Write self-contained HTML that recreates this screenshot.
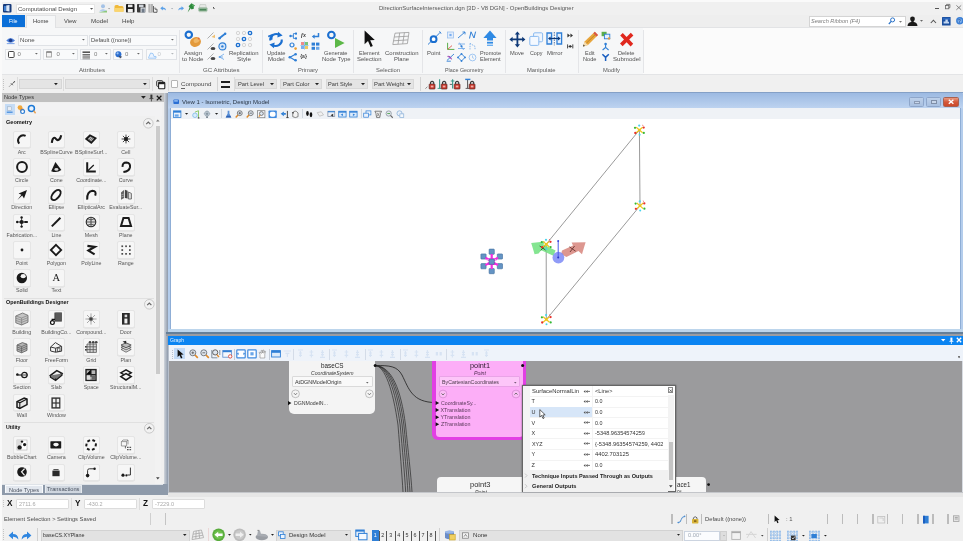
<!DOCTYPE html>
<html><head><meta charset="utf-8"><title>OpenBuildings Designer</title>
<style>
*{box-sizing:border-box;margin:0;padding:0}
html,body{width:963px;height:541px;overflow:hidden;background:#f0f0f0}
#root{position:absolute;left:0;top:0;width:963px;height:541px;overflow:hidden;background:#f0f0f0;filter:blur(0.45px);font-family:"Liberation Sans",sans-serif;font-size:6px;color:#444}
.a{position:absolute}
.t{position:absolute;white-space:nowrap;line-height:1.15;transform-origin:0 50%}
svg{position:absolute;overflow:visible}
</style></head><body><div id="root">
<div class="a" style="left:0px;top:0px;width:963px;height:15px;background:#f0f0f0;"></div>
<svg style="left:3px;top:4px;" width="9" height="9" viewBox="0 0 9 9"><rect x="0" y="0" width="8.5" height="8.5" rx="1" fill="#173a7a"/><path d="M3.2 1.5 L6.5 1 L6.5 7.5 L3.2 7 Z" fill="#d8e6f8"/><rect x="1" y="2" width="2" height="5" fill="#3f7fd0"/></svg>
<div class="a" style="left:16px;top:4px;width:79px;height:10px;background:#ffffff;border:1px solid #e6e6e6;"></div>
<div class="t" style="left:18.00px;top:5.55px;font-size:6px;color:#4a4a4a;">Computational Design</div>
<svg style="left:89.90px;top:8.08px" width="3.20" height="1.84" viewBox="0 0 3.20 1.84"><path d="M0 0 L3.20 0 L1.60 1.84 Z" fill="#555"/></svg>
<svg style="left:98px;top:3px;" width="12" height="11" viewBox="0 0 12 11"><circle cx="5" cy="3.2" r="2" fill="#a4c2e6"/><path d="M1 8.5 Q5 3.5 9 8.5 Z" fill="#b4cdec"/><path d="M0.5 9.6 L9 7.6 L9 9.6 Z" fill="#8cc87a"/></svg>
<svg style="left:108.20px;top:7.67px" width="2.20" height="1.26" viewBox="0 0 2.20 1.26"><path d="M0 0 L2.20 0 L1.10 1.26 Z" fill="#999"/></svg>
<svg style="left:114px;top:4px;" width="10" height="9" viewBox="0 0 10 9"><path d="M0.5 2.5 Q0.5 1 2 1 L4 1 L5 2 L8 2 Q9.5 2 9.5 3.5 L9.5 7.5 L0.5 7.5 Z" fill="#f0b93a"/><path d="M0.5 4 L9.5 4 L9.5 7.8 L0.5 7.8 Z" fill="#fad56e"/></svg>
<svg style="left:126px;top:4px;" width="9" height="9" viewBox="0 0 9 9"><rect x="0" y="0" width="8.5" height="8.5" rx="0.8" fill="#1c1c1c"/><rect x="2" y="0.6" width="4.5" height="2.6" fill="#e8e8e8"/><rect x="1.8" y="5" width="5" height="3.5" fill="#f2f2f2"/></svg>
<svg style="left:137px;top:4px;" width="9" height="9" viewBox="0 0 9 9"><rect x="0" y="0" width="8.5" height="8.5" rx="0.8" fill="#3a3a3a"/><rect x="2" y="0.6" width="4.5" height="2.6" fill="#cfd4da"/><rect x="3.5" y="3.5" width="5" height="5" fill="#dfe3e8"/><rect x="4.6" y="4.6" width="3" height="3.9" fill="#6f7a88"/></svg>
<svg style="left:148px;top:4px;" width="10" height="9" viewBox="0 0 10 9"><rect x="0.5" y="0" width="4.2" height="8.5" fill="#9a9a9a"/><rect x="1.5" y="0" width="2" height="8.5" fill="#c9c9c9"/><path d="M5.5 2 L5.5 8.3 L9 8.3 L9 5.2 L7 5.2 L7 3.5" fill="none" stroke="#555" stroke-width="0.9"/></svg>
<svg style="left:160px;top:6px;" width="7" height="5.4" viewBox="0 0 9 7"><path d="M0.3 3 L3.6 0.2 L3.6 2 Q7.5 2 7.8 5.8 Q6.3 3.9 3.6 4.1 L3.6 5.8 Z" fill="#5aa0e8"/></svg>
<svg style="left:170.90px;top:7.87px" width="2.20" height="1.26" viewBox="0 0 2.20 1.26"><path d="M0 0 L2.20 0 L1.10 1.26 Z" fill="#a0a8b0"/></svg>
<svg style="left:178px;top:6px;" width="7" height="5.4" viewBox="0 0 9 7"><path d="M7.8 3 L4.5 0.2 L4.5 2 Q0.6 2 0.3 5.8 Q1.8 3.9 4.5 4.1 L4.5 5.8 Z" fill="#5aa0e8"/></svg>
<svg style="left:187px;top:3px;" width="9" height="10" viewBox="0 0 9 10"><path d="M4.5 0.3 L8 2.6 L6.6 3.8 L7 5.4 L4.6 6.6 L3.8 5.2 L0.6 9.4 L2.6 4.4 L1.6 3.2 Z" fill="#2e8a3c"/><path d="M4.8 1.2 L7 2.7 L6 3.5 Z" fill="#6bc474"/></svg>
<svg style="left:198px;top:4px;" width="10" height="9" viewBox="0 0 10 9"><path d="M2 0.5 L7.6 0.5 L8.4 3.6 L1.2 3.6 Z" fill="#e4e8e4" stroke="#a8b0a8" stroke-width="0.4"/><rect x="0.4" y="3.4" width="9" height="4.2" rx="0.8" fill="#8fb496"/><rect x="1.6" y="5.2" width="6.6" height="1.2" fill="#3a7a4a"/><rect x="1.2" y="7.2" width="7.4" height="1" fill="#b7ccba"/></svg>
<div class="a" style="left:212.8px;top:6.8px;width:1.6px;height:0.9px;background:#555;"></div>
<svg style="left:212.60px;top:8.33px" width="2.00" height="1.15" viewBox="0 0 2.00 1.15"><path d="M0 0 L2.00 0 L1.00 1.15 Z" fill="#555"/></svg>
<div class="t" style="left:379.00px;top:5.02px;font-size:5.7px;transform:scaleX(1.040);color:#555;">DirectionSurfaceIntersection.dgn [3D - V8 DGN] - OpenBuildings Designer</div>
<div class="a" style="left:934.5px;top:7.6px;width:4.8px;height:1.1px;background:#555;"></div>
<svg style="left:945px;top:4.4px;" width="6" height="5.4" viewBox="0 0 6 5.4"><rect x="0.4" y="1.5" width="3.4" height="3.3" fill="none" stroke="#666" stroke-width="0.8"/><path d="M1.5 1.5 L1.5 0.4 L4.9 0.4 L4.9 3.7 L3.8 3.7" fill="none" stroke="#666" stroke-width="0.8"/></svg>
<svg style="left:956px;top:4.8px;" width="6" height="5.4" viewBox="0 0 6 5.4"><path d="M0.4 0.4 L5.2 4.8 M5.2 0.4 L0.4 4.8" stroke="#6a6a6a" stroke-width="0.8"/></svg>
<div class="a" style="left:0px;top:15px;width:963px;height:13px;background:#eeeeee;"></div>
<div class="a" style="left:0px;top:27px;width:963px;height:1px;background:#e2e3e5"></div>
<div class="a" style="left:2px;top:15px;width:23px;height:12.3px;background:#0b6fd8;"></div>
<div class="t" style="left:9.25px;top:17.95px;font-size:6px;transform:scaleX(0.879);color:#fff;">File</div>
<div class="a" style="left:25.5px;top:15px;width:30px;height:13px;background:#f6f7f8;border:1px solid #e0e1e3;border-bottom:none;"></div>
<div class="t" style="left:32.75px;top:17.95px;font-size:6px;transform:scaleX(0.968);color:#3a3a3a;">Home</div>
<div class="t" style="left:63.75px;top:17.95px;font-size:6px;transform:scaleX(0.969);color:#444;">View</div>
<div class="t" style="left:91.00px;top:17.95px;font-size:6px;transform:scaleX(1.040);color:#444;">Model</div>
<div class="t" style="left:122.25px;top:17.95px;font-size:6px;transform:scaleX(1.013);color:#444;">Help</div>
<div class="a" style="left:808.5px;top:15.5px;width:97px;height:11.5px;background:#ffffff;border:1px solid #d4d4d4;"></div>
<div class="t" style="left:811.00px;top:18.14px;font-size:5.5px;transform:scaleX(1.021);font-style:italic;color:#7d7d7d;">Search Ribbon (F4)</div>
<svg style="left:888px;top:17px;" width="8" height="8" viewBox="0 0 8 8"><circle cx="4.6" cy="2.9" r="2" fill="none" stroke="#2a72c8" stroke-width="1"/><path d="M3.2 4.4 L0.8 7" stroke="#2a72c8" stroke-width="1.2"/></svg>
<svg style="left:898.50px;top:20.64px" width="3.00" height="1.72" viewBox="0 0 3.00 1.72"><path d="M0 0 L3.00 0 L1.50 1.72 Z" fill="#777"/></svg>
<svg style="left:907px;top:15.5px;" width="12" height="11" viewBox="0 0 12 11"><circle cx="5.5" cy="3" r="2.4" fill="#1a1a1a"/><path d="M0.5 10 Q0.8 6.4 4 6 L7 6 Q10.2 6.4 10.5 10 Z" fill="#1a1a1a"/><rect x="4.3" y="4.6" width="2.4" height="2" fill="#1a1a1a"/></svg>
<svg style="left:920.10px;top:20.44px" width="3.00" height="1.72" viewBox="0 0 3.00 1.72"><path d="M0 0 L3.00 0 L1.50 1.72 Z" fill="#666"/></svg>
<svg style="left:930px;top:19px;" width="7" height="5" viewBox="0 0 7 5"><path d="M0.8 4 L3.4 1.2 L6 4" fill="none" stroke="#555" stroke-width="1.1"/></svg>
<svg style="left:941.6px;top:16.8px;" width="9" height="9" viewBox="0 0 9 9"><rect x="0" y="0" width="8.6" height="8.6" rx="0.5" fill="#1b4f9e"/><rect x="0.8" y="0.8" width="7" height="2" fill="#2a66bc"/><path d="M1.6 6.6 L1.6 4.4 L3.4 4.4 L3.4 2.6 L5.8 2.6 L5.8 4.8 L7 4.8 L7 6.6 Z" fill="#c4d8f2"/></svg>
<svg style="left:955.6px;top:17.4px;" width="8" height="8" viewBox="0 0 8 8"><circle cx="3.8" cy="3.8" r="3.7" fill="#3c80d6"/><circle cx="3.8" cy="3.8" r="2.2" fill="#7fb0ec"/></svg>
<div class="t" style="left:957.99px;top:18.75px;font-size:4.6px;font-weight:bold;color:#1c4f9a;">?</div>
<div class="a" style="left:0px;top:28px;width:963px;height:46px;background:#f6f7f8;"></div>
<div class="a" style="left:643px;top:28px;width:320px;height:46px;background:#fbfbfb;"></div>
<div class="a" style="left:0px;top:74px;width:963px;height:1px;background:#e3e4e6"></div>
<div class="a" style="left:178.5px;top:30px;width:1px;height:43px;background:#e4e5e8"></div>
<div class="a" style="left:261.5px;top:30px;width:1px;height:43px;background:#e4e5e8"></div>
<div class="a" style="left:352.5px;top:30px;width:1px;height:43px;background:#e4e5e8"></div>
<div class="a" style="left:422px;top:30px;width:1px;height:43px;background:#e4e5e8"></div>
<div class="a" style="left:505px;top:30px;width:1px;height:43px;background:#e4e5e8"></div>
<div class="a" style="left:578px;top:30px;width:1px;height:43px;background:#e4e5e8"></div>
<div class="a" style="left:642.5px;top:30px;width:1px;height:43px;background:#e4e5e8"></div>
<svg style="left:5.5px;top:36px;" width="10" height="9" viewBox="0 0 10 9"><path d="M0.3 4.5 Q4.5 -0.5 9 4.5 Q4.5 9 0.3 4.5 Z" fill="#4e7fd8"/><circle cx="4.6" cy="4.4" r="1.7" fill="#1b3a86"/><path d="M0.8 7.6 L8.6 7.6" stroke="#7aa3e8" stroke-width="1"/></svg>
<div class="a" style="left:18px;top:35px;width:69.5px;height:10.5px;background:#f9fafb;border:1px solid #dfe2e6;"></div>
<div class="t" style="left:20.00px;top:37.00px;font-size:6px;transform:scaleX(1.011);color:#4a4a4a;">None</div>
<svg style="left:81.60px;top:39.05px" width="2.80" height="1.61" viewBox="0 0 2.80 1.61"><path d="M0 0 L2.80 0 L1.40 1.61 Z" fill="#666"/></svg>
<div class="a" style="left:89px;top:35px;width:87.5px;height:10.5px;background:#f9fafb;border:1px solid #dfe2e6;"></div>
<div class="t" style="left:91.00px;top:37.00px;font-size:6px;transform:scaleX(0.964);color:#4a4a4a;">Default ((none))</div>
<svg style="left:170.60px;top:39.05px" width="2.80" height="1.61" viewBox="0 0 2.80 1.61"><path d="M0 0 L2.80 0 L1.40 1.61 Z" fill="#666"/></svg>
<div class="a" style="left:5px;top:49px;width:35.5px;height:11px;background:#f9fafb;border:1px solid #dfe2e6;"></div>
<div class="t" style="left:17.50px;top:51.25px;font-size:6px;color:#7c7c7c;">0</div>
<svg style="left:34.60px;top:53.30px" width="2.80" height="1.61" viewBox="0 0 2.80 1.61"><path d="M0 0 L2.80 0 L1.40 1.61 Z" fill="#666"/></svg>
<svg style="left:7.5px;top:51px;" width="7" height="7" viewBox="0 0 7 7"><rect x="0.5" y="0.5" width="5.6" height="6" rx="0.8" fill="#fff" stroke="#444" stroke-width="1"/></svg>
<div class="a" style="left:43px;top:49px;width:34.5px;height:11px;background:#f9fafb;border:1px solid #dfe2e6;"></div>
<div class="t" style="left:56.50px;top:51.25px;font-size:6px;color:#7c7c7c;">0</div>
<svg style="left:71.60px;top:53.30px" width="2.80" height="1.61" viewBox="0 0 2.80 1.61"><path d="M0 0 L2.80 0 L1.40 1.61 Z" fill="#666"/></svg>
<svg style="left:46px;top:51px;" width="7" height="7" viewBox="0 0 7 7"><rect x="0.5" y="1" width="5" height="5" fill="#f4f4f4" stroke="#9a9a9a" stroke-width="0.8"/><path d="M0.5 1 L5.5 1" stroke="#6d6d6d" stroke-width="1.2"/></svg>
<div class="a" style="left:80px;top:49px;width:30.5px;height:11px;background:#f9fafb;border:1px solid #dfe2e6;"></div>
<div class="t" style="left:94.00px;top:51.25px;font-size:6px;color:#7c7c7c;">0</div>
<svg style="left:104.60px;top:53.30px" width="2.80" height="1.61" viewBox="0 0 2.80 1.61"><path d="M0 0 L2.80 0 L1.40 1.61 Z" fill="#666"/></svg>
<svg style="left:82px;top:50.5px;" width="9" height="8" viewBox="0 0 9 8"><path d="M0.5 1.2 L8 1.2" stroke="#555" stroke-width="1.6"/><path d="M0.5 3.8 L8 3.8" stroke="#555" stroke-width="1.3"/><path d="M0.5 6 L8 6" stroke="#444" stroke-width="1"/><path d="M0.5 7.8 L8 7.8" stroke="#666" stroke-width="0.7"/></svg>
<div class="a" style="left:112.5px;top:49px;width:30.5px;height:11px;background:#f9fafb;border:1px solid #dfe2e6;"></div>
<div class="t" style="left:125.00px;top:51.25px;font-size:6px;color:#7c7c7c;">0</div>
<svg style="left:137.10px;top:53.30px" width="2.80" height="1.61" viewBox="0 0 2.80 1.61"><path d="M0 0 L2.80 0 L1.40 1.61 Z" fill="#666"/></svg>
<svg style="left:114.5px;top:51px;" width="8" height="8" viewBox="0 0 8 8"><circle cx="3.4" cy="3.2" r="3" fill="#2d6fd0"/><circle cx="2.6" cy="2.3" r="1.1" fill="#9cc4f4"/><path d="M3.5 4.5 L7.2 5.8 L5 7.5 Z" fill="#3a4a66"/></svg>
<div class="a" style="left:145.5px;top:49px;width:31px;height:11px;background:#f9fafb;border:1px solid #dfe2e6;"></div>
<div class="t" style="left:157.50px;top:51.25px;font-size:6px;color:#c4c8cc;">0</div>
<svg style="left:170.60px;top:53.30px" width="2.80" height="1.61" viewBox="0 0 2.80 1.61"><path d="M0 0 L2.80 0 L1.40 1.61 Z" fill="#b4b8bc"/></svg>
<svg style="left:147.5px;top:51px;" width="9" height="8" viewBox="0 0 9 8"><path d="M0.6 6.4 L2.6 2 L5 2.6 L6 5.6 L8 5.4 L8 7.2 L0.6 7.2 Z" fill="#eaf3ff" stroke="#8fc0f4" stroke-width="0.8"/></svg>
<div class="t" style="left:78.50px;top:67.27px;font-size:5.8px;transform:scaleX(1.061);color:#5a5a5a;">Attributes</div>
<svg style="left:184px;top:30px;" width="18" height="18" viewBox="0 0 18 18"><circle cx="4.8" cy="4.8" r="3.2" fill="none" stroke="#1b6fd0" stroke-width="2.1"/><ellipse cx="11.5" cy="12" rx="5.6" ry="4.8" fill="#e39a3c" transform="rotate(-25 11.5 12)"/><ellipse cx="12.5" cy="10.6" rx="3" ry="2.2" fill="#f0b868" transform="rotate(-25 12.5 10.6)"/><circle cx="14.6" cy="8.6" r="1" fill="#e8673a"/></svg>
<div class="t" style="left:184.00px;top:49.77px;font-size:5.8px;transform:scaleX(1.034);color:#505050;">Assign</div>
<div class="t" style="left:182.25px;top:55.66px;font-size:5.8px;transform:scaleX(1.058);color:#505050;">to Node</div>
<svg style="left:206.5px;top:32px;" width="9" height="8" viewBox="0 0 9 8"><path d="M0.5 6.5 L6.5 0.5" stroke="#9a9a9a" stroke-width="0.8"/><path d="M4.5 5 L8 2.5 L8 6 Z" fill="#f0c070"/></svg>
<svg style="left:206.5px;top:42.5px;" width="9" height="8" viewBox="0 0 9 8"><path d="M0.5 6.5 L6.5 0.5" stroke="#9a9a9a" stroke-width="0.8"/><ellipse cx="6" cy="5.5" rx="2.4" ry="1.5" fill="#444"/></svg>
<svg style="left:206.5px;top:52.5px;" width="9" height="8" viewBox="0 0 9 8"><path d="M0.5 6.5 L6.5 0.5" stroke="#9a9a9a" stroke-width="0.8"/><ellipse cx="6" cy="5.5" rx="2.4" ry="1.5" fill="#444"/></svg>
<svg style="left:217.5px;top:31.5px;" width="9" height="8" viewBox="0 0 9 8"><path d="M1 6.5 L7.5 1.5" stroke="#2f7fd6" stroke-width="1.8"/><circle cx="1.6" cy="6.2" r="1.2" fill="#2f7fd6"/><circle cx="7.2" cy="1.8" r="1.2" fill="#2f7fd6"/></svg>
<svg style="left:217.5px;top:41.5px;" width="9" height="9" viewBox="0 0 9 9"><circle cx="4.4" cy="4.4" r="3.5" fill="#d8e8fa" stroke="#2f7fd6" stroke-width="1.1"/><circle cx="4.4" cy="4.4" r="1.2" fill="#2f7fd6"/></svg>
<svg style="left:217.5px;top:52.5px;" width="9" height="8" viewBox="0 0 9 8"><path d="M1.5 4 L6 1 M1.5 4 L6 6.5 M1.5 4 L5 4" stroke="#6aa6e8" stroke-width="0.8"/><circle cx="1.6" cy="4" r="1" fill="#6aa6e8"/></svg>
<svg style="left:236px;top:31px;" width="16" height="16" viewBox="0 0 16 16"><circle cx="2" cy="2" r="1.7" fill="#f4f4f4" stroke="#c8c8c8" stroke-width="0.7"/><circle cx="8" cy="2" r="1.7" fill="#f4f4f4" stroke="#c8c8c8" stroke-width="0.7"/><circle cx="14" cy="2" r="1.7" fill="#eaf2fc" stroke="#1b6fd0" stroke-width="1.3"/><circle cx="2" cy="8" r="1.7" fill="#f4f4f4" stroke="#c8c8c8" stroke-width="0.7"/><circle cx="8" cy="8" r="1.7" fill="#eaf2fc" stroke="#1b6fd0" stroke-width="1.3"/><circle cx="14" cy="8" r="1.7" fill="#f4f4f4" stroke="#c8c8c8" stroke-width="0.7"/><circle cx="2" cy="14" r="1.7" fill="#eaf2fc" stroke="#1b6fd0" stroke-width="1.3"/><circle cx="8" cy="14" r="1.7" fill="#f4f4f4" stroke="#c8c8c8" stroke-width="0.7"/><circle cx="14" cy="14" r="1.7" fill="#f4f4f4" stroke="#c8c8c8" stroke-width="0.7"/></svg>
<div class="t" style="left:229.25px;top:49.77px;font-size:5.8px;transform:scaleX(1.028);color:#505050;">Replication</div>
<div class="t" style="left:237.00px;top:55.66px;font-size:5.8px;transform:scaleX(1.086);color:#505050;">Style</div>
<div class="t" style="left:202.75px;top:67.27px;font-size:5.8px;transform:scaleX(1.058);color:#5a5a5a;">GC Attributes</div>
<svg style="left:267px;top:30.5px;" width="18" height="18" viewBox="0 0 18 18"><path d="M3.2 9.5 A6 6 0 0 1 12.5 4" fill="none" stroke="#1b6fd0" stroke-width="2"/><path d="M11 0.8 L15.6 4.6 L10.4 6.6 Z" fill="#1b6fd0"/><path d="M14.8 8.5 A6 6 0 0 1 5.5 14" fill="none" stroke="#1b6fd0" stroke-width="2"/><path d="M7 17.2 L2.4 13.4 L7.6 11.4 Z" fill="#1b6fd0"/><path d="M1.2 5.4 L5 4 L4.6 8.8" fill="none" stroke="#1b6fd0" stroke-width="1.6"/></svg>
<div class="t" style="left:266.75px;top:49.77px;font-size:5.8px;transform:scaleX(0.989);color:#505050;">Update</div>
<div class="t" style="left:267.75px;top:55.66px;font-size:5.8px;transform:scaleX(1.045);color:#505050;">Model</div>
<svg style="left:288.5px;top:31.5px;" width="9" height="8" viewBox="0 0 9 8"><path d="M1.4 4 L4.4 4 M4.4 1.6 L4.4 6.4 M4.4 1.6 L6.6 1.6 M4.4 6.4 L6.6 6.4" stroke="#2f7fd6" stroke-width="0.9" fill="none"/><circle cx="1.5" cy="4" r="1.2" fill="#2f7fd6"/><rect x="6" y="0.6" width="2" height="2" fill="#2f7fd6"/><rect x="6" y="5.4" width="2" height="2" fill="#2f7fd6"/></svg>
<svg style="left:288.5px;top:41.5px;" width="9" height="9" viewBox="0 0 9 9"><circle cx="3" cy="3" r="2" fill="none" stroke="#2f7fd6" stroke-width="1.2"/><circle cx="6.6" cy="6.6" r="1.3" fill="#f0a030"/></svg>
<svg style="left:288px;top:52.5px;" width="10" height="9" viewBox="0 0 10 9"><path d="M7.4 1.2 L2 4.3 L7.4 7.4" fill="none" stroke="#2f7fd6" stroke-width="1.1"/><circle cx="7.6" cy="1.3" r="1.3" fill="#2f7fd6"/><circle cx="1.8" cy="4.3" r="1.3" fill="#2f7fd6"/><circle cx="7.6" cy="7.3" r="1.3" fill="#2f7fd6"/></svg>
<div class="t" style="left:301.00px;top:32.05px;font-size:6px;font-weight:bold;font-style:italic;color:#333;font-family:'Liberation Serif',serif;">fx</div>
<svg style="left:299.5px;top:41px;" width="9" height="9" viewBox="0 0 9 9"><rect x="1" y="1" width="3" height="3" fill="#f08a8a"/><rect x="5" y="1" width="3" height="3" fill="#7ac47a"/><rect x="1" y="5" width="3" height="3" fill="#7aaef0"/><rect x="5" y="5" width="3" height="3" fill="#f0c860"/><path d="M0.5 4.5 L8.5 4.5 M4.5 0.5 L4.5 8.5" stroke="#59a8e0" stroke-width="0.6"/></svg>
<div class="t" style="left:300.16px;top:54.12px;font-size:5px;font-weight:bold;color:#444;">{a}</div>
<svg style="left:310.5px;top:31.5px;" width="9" height="8" viewBox="0 0 9 8"><path d="M7.5 1 L7.5 4.6 L2.6 4.6" fill="none" stroke="#2f7fd6" stroke-width="1.5"/><path d="M3.6 2.4 L0.8 4.6 L3.6 6.8 Z" fill="#2f7fd6"/></svg>
<svg style="left:310.5px;top:41.5px;" width="9" height="9" viewBox="0 0 9 9"><rect x="0.6" y="0.6" width="3.4" height="3" fill="#2f7fd6"/><rect x="5" y="0.6" width="3.4" height="3" fill="#2f7fd6"/><rect x="0.6" y="4.8" width="3.4" height="3" fill="#2f7fd6"/><rect x="5" y="4.8" width="3.4" height="3" fill="#6aa6e8"/></svg>
<svg style="left:326px;top:30px;" width="20" height="19" viewBox="0 0 20 19"><circle cx="5.4" cy="5" r="3.3" fill="none" stroke="#1b6fd0" stroke-width="2.1"/><path d="M9 8 L18.6 13 L9 18 Z" fill="#5cb848"/></svg>
<div class="t" style="left:324.25px;top:49.77px;font-size:5.8px;transform:scaleX(0.972);color:#505050;">Generate</div>
<div class="t" style="left:321.75px;top:55.66px;font-size:5.8px;transform:scaleX(1.020);color:#505050;">Node Type</div>
<div class="t" style="left:298.00px;top:67.27px;font-size:5.8px;color:#5a5a5a;">Primary</div>
<svg style="left:364px;top:30px;" width="12" height="18" viewBox="0 0 12 18"><path d="M0.6 0.4 L0.6 14.2 L4 11 L6.6 17 L8.8 16 L6.2 10.2 L10.8 10 Z" fill="#111"/></svg>
<div class="t" style="left:359.25px;top:49.77px;font-size:5.8px;transform:scaleX(0.963);color:#505050;">Element</div>
<div class="t" style="left:357.25px;top:55.66px;font-size:5.8px;transform:scaleX(1.027);color:#505050;">Selection</div>
<svg style="left:392px;top:32px;" width="19" height="14" viewBox="0 0 19 14"><path d="M3 1.2 L17 0.4 L15.4 11.6 L0.8 12.6 Z M2.3 5 L16.4 4.2 M1.5 8.8 L15.9 7.9 M7.7 0.9 L6 12.2 M12.4 0.6 L10.7 11.9" fill="none" stroke="#9a9a9a" stroke-width="0.8"/></svg>
<div class="t" style="left:384.75px;top:49.77px;font-size:5.8px;transform:scaleX(1.029);color:#505050;">Construction</div>
<div class="t" style="left:394.00px;top:55.66px;font-size:5.8px;transform:scaleX(1.011);color:#505050;">Plane</div>
<div class="t" style="left:376.00px;top:67.27px;font-size:5.8px;transform:scaleX(1.006);color:#5a5a5a;">Selection</div>
<svg style="left:426.5px;top:31px;" width="15" height="16" viewBox="0 0 15 16"><path d="M1 13.5 L12.8 1.8" stroke="#2f7fd6" stroke-width="1"/><circle cx="6.6" cy="8.2" r="2.9" fill="#fff" stroke="#1b6fd0" stroke-width="2"/><path d="M12.6 0.4 L14 2.6" stroke="#1b6fd0" stroke-width="1"/></svg>
<div class="t" style="left:427.25px;top:49.77px;font-size:5.8px;transform:scaleX(1.021);color:#505050;">Point</div>
<svg style="left:446px;top:31px;" width="9" height="8" viewBox="0 0 9 8"><rect x="1.5" y="1" width="6" height="6" fill="#e4eefb" stroke="#9cc0ee" stroke-width="0.8"/><rect x="3.4" y="2.9" width="2.2" height="2.2" fill="#7aaef0"/></svg>
<svg style="left:457px;top:31px;" width="9" height="8" viewBox="0 0 9 8"><path d="M1 7 L8 1" stroke="#2f7fd6" stroke-width="0.9"/><path d="M5.5 1 L8 1 L8 3.4" fill="none" stroke="#2f7fd6" stroke-width="0.9"/></svg>
<svg style="left:468px;top:31px;" width="9" height="8" viewBox="0 0 9 8"><path d="M1.5 7.5 L3 0.8 L6 7 L7.6 0.6" fill="none" stroke="#2f7fd6" stroke-width="1"/></svg>
<svg style="left:446px;top:42px;" width="9" height="9" viewBox="0 0 9 9"><path d="M1.6 0.8 L1.6 7.4 L8.4 7.4" fill="none" stroke="#5cae4a" stroke-width="1"/><path d="M1.6 7.4 L6 3.6" stroke="#e05a4a" stroke-width="0.9"/></svg>
<svg style="left:457px;top:42px;" width="9" height="9" viewBox="0 0 9 9"><path d="M1 2 L8 2 M1 6.5 L8 6.5 M2.4 0.6 L6.6 8" stroke="#6aa6e8" stroke-width="0.8"/><circle cx="4.5" cy="4.3" r="1.1" fill="#2f7fd6"/></svg>
<svg style="left:468px;top:42px;" width="9" height="9" viewBox="0 0 9 9"><path d="M2 1.4 L2 7.4 M2 1.4 L7 4.4 L7 7.4" fill="none" stroke="#6aa6e8" stroke-width="0.8" stroke-dasharray="1.4 1"/></svg>
<svg style="left:446px;top:53px;" width="10" height="9" viewBox="0 0 10 9"><path d="M1 7.4 L8 1" stroke="#2f7fd6" stroke-width="0.9"/><path d="M1.4 3.4 Q4.6 2.6 5.6 6.4" fill="#b060c8" stroke="#8a3aa8" stroke-width="0.7"/><path d="M0.6 8.2 L4.8 8.2" stroke="#2f7fd6" stroke-width="0.9"/></svg>
<svg style="left:457px;top:53px;" width="9" height="9" viewBox="0 0 9 9"><path d="M4.5 0.8 L8 4.4 L4.5 8 L1 4.4 Z" fill="none" stroke="#2f7fd6" stroke-width="0.9"/><circle cx="4.5" cy="0.9" r="0.9" fill="#2f7fd6"/><circle cx="8" cy="4.4" r="0.9" fill="#2f7fd6"/><circle cx="4.5" cy="8" r="0.9" fill="#2f7fd6"/><circle cx="1" cy="4.4" r="0.9" fill="#2f7fd6"/></svg>
<svg style="left:468px;top:53px;" width="9" height="9" viewBox="0 0 9 9"><circle cx="4.5" cy="4.5" r="3.4" fill="none" stroke="#8abaf0" stroke-width="0.8"/><path d="M4.5 2.5 L4.5 4.7 L6 5.4" fill="none" stroke="#8abaf0" stroke-width="0.7"/></svg>
<svg style="left:483px;top:30px;" width="15" height="18" viewBox="0 0 15 18"><path d="M7 0.6 L13.6 8 L10 8 L10 10.6 L4 10.6 L4 8 L0.4 8 Z" fill="#2f8ae4"/><rect x="4" y="11.8" width="6" height="1.8" fill="#2f8ae4"/><rect x="4" y="14.6" width="6" height="1.4" fill="#6aaef0"/></svg>
<div class="t" style="left:480.00px;top:49.77px;font-size:5.8px;transform:scaleX(0.958);color:#505050;">Promote</div>
<div class="t" style="left:480.25px;top:55.66px;font-size:5.8px;transform:scaleX(0.963);color:#505050;">Element</div>
<div class="t" style="left:444.75px;top:67.27px;font-size:5.8px;transform:scaleX(0.926);color:#5a5a5a;">Place Geometry</div>
<svg style="left:508.5px;top:31px;" width="17" height="17" viewBox="0 0 17 17"><path d="M8.4 0.4 L11 3.6 L9.3 3.6 L9.3 7.5 L13.2 7.5 L13.2 5.8 L16.4 8.4 L13.2 11 L13.2 9.3 L9.3 9.3 L9.3 13.2 L11 13.2 L8.4 16.4 L5.8 13.2 L7.5 13.2 L7.5 9.3 L3.6 9.3 L3.6 11 L0.4 8.4 L3.6 5.8 L3.6 7.5 L7.5 7.5 L7.5 3.6 L5.8 3.6 Z" fill="#0f3a78"/></svg>
<div class="t" style="left:510.00px;top:49.77px;font-size:5.8px;transform:scaleX(0.987);color:#505050;">Move</div>
<svg style="left:529px;top:32px;" width="15" height="15" viewBox="0 0 15 15"><rect x="4.6" y="0.8" width="9" height="9" rx="1.2" fill="#eef5fd" stroke="#8abaf0" stroke-width="1"/><rect x="0.8" y="4.4" width="9" height="9" rx="1.2" fill="#f4f9ff" stroke="#8abaf0" stroke-width="1"/></svg>
<div class="t" style="left:530.25px;top:49.77px;font-size:5.8px;transform:scaleX(0.923);color:#505050;">Copy</div>
<svg style="left:546px;top:32px;" width="17" height="14" viewBox="0 0 17 14"><path d="M1 1 L5.6 1 L5.6 12 L1 12 Z" fill="#e4effc" stroke="#2f7fd6" stroke-width="1.3"/><path d="M15.6 1 L11 1 L11 12 L15.6 12 Z" fill="#e4effc" stroke="#2f7fd6" stroke-width="1.3"/><path d="M3 6.5 L13.6 6.5" stroke="#0f3a78" stroke-width="1.2"/><path d="M2 6.5 L4.6 4.6 L4.6 8.4 Z M14.6 6.5 L12 4.6 L12 8.4 Z" fill="#0f3a78"/><path d="M8.3 0 L8.3 13.4" stroke="#0f3a78" stroke-width="0.7" stroke-dasharray="1.5 1"/></svg>
<div class="t" style="left:547.25px;top:49.77px;font-size:5.8px;transform:scaleX(1.024);color:#505050;">Mirror</div>
<svg style="left:567px;top:33px;" width="7" height="5" viewBox="0 0 7 5"><path d="M0.4 0.4 L3 2.4 L0.4 4.4 Z M3.4 0.4 L6 2.4 L3.4 4.4 Z" fill="#333"/></svg>
<svg style="left:567px;top:44px;" width="7" height="5" viewBox="0 0 7 5"><path d="M0.6 0.4 L0.6 4.4 M5.8 0.4 L5.8 4.4" stroke="#333" stroke-width="0.9"/><path d="M1.2 2.4 L3.2 1 L3.2 3.8 Z M5.2 2.4 L3.2 1 L3.2 3.8 Z" fill="#333"/></svg>
<div class="t" style="left:527.25px;top:67.27px;font-size:5.8px;transform:scaleX(1.004);color:#5a5a5a;">Manipulate</div>
<svg style="left:581.5px;top:30.5px;" width="18" height="17" viewBox="0 0 18 17"><path d="M1 15.6 L2.6 10.6 L12.8 0.8 L16 4 L6 14 Z" fill="#e8a63c"/><path d="M12.8 0.8 L16 4 L14.6 5.4 L11.4 2.2 Z" fill="#d9534a"/><path d="M1 15.6 L2.6 10.6 L6 14 Z" fill="#f4dcae"/><path d="M1 15.6 L1.6 13.6 L3 15 Z" fill="#333"/><path d="M4.4 12.2 L13 3.8" stroke="#b87a1e" stroke-width="0.8"/></svg>
<div class="t" style="left:585.25px;top:49.77px;font-size:5.8px;transform:scaleX(0.951);color:#505050;">Edit</div>
<div class="t" style="left:583.25px;top:55.66px;font-size:5.8px;transform:scaleX(0.974);color:#505050;">Node</div>
<svg style="left:600.5px;top:30.5px;" width="10" height="9" viewBox="0 0 10 9"><rect x="0.6" y="0.8" width="5" height="4.4" fill="#5cae4a"/><rect x="3.4" y="3.2" width="5.4" height="4.6" fill="#e8f0fc" stroke="#2f7fd6" stroke-width="0.9"/><circle cx="8" cy="7.4" r="1.2" fill="#e39a3c"/></svg>
<svg style="left:600.5px;top:42px;" width="10" height="9" viewBox="0 0 10 9"><circle cx="4.6" cy="2" r="1.3" fill="#2f7fd6"/><path d="M4.6 2.6 L4.6 5.4 L1.6 8 M4.6 5.4 L7.6 8" fill="none" stroke="#2f7fd6" stroke-width="1.1"/></svg>
<svg style="left:600.5px;top:53px;" width="10" height="9" viewBox="0 0 10 9"><path d="M1.4 1.2 L4.6 4.4 L7.8 1.2 M4.6 4.4 L4.6 8" fill="none" stroke="#1b5fc0" stroke-width="1.5"/></svg>
<svg style="left:618.5px;top:31.5px;" width="16" height="16" viewBox="0 0 16 16"><path d="M1.2 3.4 L3.8 1 L7.6 5 L11.8 0.8 L14.4 3.4 L10.2 7.6 L14.2 11.8 L11.6 14.4 L7.6 10.2 L3.6 14.2 L1 11.6 L5 7.6 Z" fill="#e0281e"/></svg>
<div class="t" style="left:618.25px;top:49.77px;font-size:5.8px;transform:scaleX(0.984);color:#505050;">Delete</div>
<div class="t" style="left:612.75px;top:55.66px;font-size:5.8px;transform:scaleX(1.053);color:#505050;">Submodel</div>
<div class="t" style="left:602.50px;top:67.27px;font-size:5.8px;transform:scaleX(0.995);color:#5a5a5a;">Modify</div>
<div class="a" style="left:0px;top:75px;width:963px;height:18px;background:#f0f0f0;"></div>
<div class="a" style="left:3px;top:79px;width:1px;height:1px;background:#c4c4c4;"></div>
<div class="a" style="left:3px;top:81px;width:1px;height:1px;background:#c4c4c4;"></div>
<div class="a" style="left:3px;top:83px;width:1px;height:1px;background:#c4c4c4;"></div>
<div class="a" style="left:3px;top:85px;width:1px;height:1px;background:#c4c4c4;"></div>
<div class="a" style="left:3px;top:87px;width:1px;height:1px;background:#c4c4c4;"></div>
<div class="a" style="left:3px;top:89px;width:1px;height:1px;background:#c4c4c4;"></div>
<svg style="left:7.5px;top:80px;" width="8" height="8" viewBox="0 0 8 8"><path d="M0.8 7 L4 3.8" stroke="#9a9a9a" stroke-width="0.8"/><path d="M3.6 4.4 L6.4 1 L7.2 1.8 Z" fill="#333"/><path d="M3 3.4 L4.8 5.2" stroke="#333" stroke-width="0.9"/></svg>
<div class="a" style="left:17px;top:77px;width:1px;height:14px;background:#dcdcdc"></div>
<div class="a" style="left:19px;top:79px;width:42.5px;height:10.3px;background:#e4e4e4;border:1px solid #d6d6d6;"></div>
<svg style="left:54.10px;top:83.31px" width="3.80" height="2.18" viewBox="0 0 3.80 2.18"><path d="M0 0 L3.80 0 L1.90 2.18 Z" fill="#222"/></svg>
<div class="a" style="left:63px;top:77px;width:1px;height:14px;background:#dcdcdc"></div>
<div class="a" style="left:65px;top:79px;width:84.5px;height:10.3px;background:#e4e4e4;border:1px solid #d6d6d6;"></div>
<svg style="left:142.60px;top:83.31px" width="3.80" height="2.18" viewBox="0 0 3.80 2.18"><path d="M0 0 L3.80 0 L1.90 2.18 Z" fill="#222"/></svg>
<div class="a" style="left:152px;top:77px;width:1px;height:14px;background:#dcdcdc"></div>
<svg style="left:155.5px;top:79.5px;" width="10" height="10" viewBox="0 0 10 10"><rect x="0.7" y="0.7" width="6" height="5.6" rx="0.8" fill="#f0f0f0" stroke="#333" stroke-width="1"/><rect x="2.6" y="2.4" width="6.2" height="6.4" rx="0.8" fill="#fdfdfd" stroke="#222" stroke-width="1.1"/><path d="M2.6 3.4 L8.8 3.4" stroke="#222" stroke-width="1.6"/></svg>
<div class="a" style="left:167.5px;top:77px;width:1px;height:14px;background:#dcdcdc"></div>
<div class="a" style="left:170.5px;top:80px;width:7.6px;height:7.6px;background:#fdfdfd;border:1px solid #b4b4b4;border-radius:1px;"></div>
<div class="t" style="left:181.00px;top:81.07px;font-size:5.8px;transform:scaleX(1.075);color:#4a4a4a;">Compound</div>
<div class="a" style="left:181px;top:87.7px;width:3.6px;height:1px;background:#666"></div>
<div class="a" style="left:216.5px;top:77px;width:1px;height:14px;background:#d4d4d4"></div>
<div class="a" style="left:221.2px;top:81.2px;width:8.8px;height:2.1px;background:#1e1e1e;"></div>
<div class="a" style="left:221.2px;top:85.5px;width:8.8px;height:2.1px;background:#1e1e1e;"></div>
<div class="a" style="left:233.5px;top:77px;width:1px;height:14px;background:#dcdcdc"></div>
<div class="a" style="left:235px;top:79px;width:41.5px;height:10.3px;background:#e4e4e4;border:1px solid #d8d8d8;"></div>
<div class="t" style="left:237.50px;top:81.07px;font-size:5.8px;transform:scaleX(0.996);color:#3a3a3a;">Part Level</div>
<svg style="left:269.70px;top:83.25px" width="4.00" height="2.30" viewBox="0 0 4.00 2.30"><path d="M0 0 L4.00 0 L2.00 2.30 Z" fill="#222"/></svg>
<div class="a" style="left:280px;top:79px;width:42px;height:10.3px;background:#e4e4e4;border:1px solid #d8d8d8;"></div>
<div class="t" style="left:282.50px;top:81.07px;font-size:5.8px;transform:scaleX(1.015);color:#3a3a3a;">Part Color</div>
<svg style="left:315.20px;top:83.25px" width="4.00" height="2.30" viewBox="0 0 4.00 2.30"><path d="M0 0 L4.00 0 L2.00 2.30 Z" fill="#222"/></svg>
<div class="a" style="left:325.5px;top:79px;width:42.5px;height:10.3px;background:#e4e4e4;border:1px solid #d8d8d8;"></div>
<div class="t" style="left:328.00px;top:81.07px;font-size:5.8px;transform:scaleX(0.974);color:#3a3a3a;">Part Style</div>
<svg style="left:361.20px;top:83.25px" width="4.00" height="2.30" viewBox="0 0 4.00 2.30"><path d="M0 0 L4.00 0 L2.00 2.30 Z" fill="#222"/></svg>
<div class="a" style="left:371.5px;top:79px;width:42.5px;height:10.3px;background:#e4e4e4;border:1px solid #d8d8d8;"></div>
<div class="t" style="left:374.00px;top:81.07px;font-size:5.8px;transform:scaleX(1.010);color:#3a3a3a;">Part Weight</div>
<svg style="left:407.20px;top:83.25px" width="4.00" height="2.30" viewBox="0 0 4.00 2.30"><path d="M0 0 L4.00 0 L2.00 2.30 Z" fill="#222"/></svg>
<div class="a" style="left:419.5px;top:77px;width:1px;height:14px;background:#d4d4d4"></div>
<svg style="left:423.5px;top:77.5px;" width="13" height="12" viewBox="0 0 13 12"><path d="M1.4 10.6 L3.4 8.8" stroke="#8a8a8a" stroke-width="1"/><rect x="5.2" y="6" width="5.8" height="5" rx="0.6" fill="#c8382c" stroke="#5a2a26" stroke-width="0.7"/><path d="M6.5 6 L6.5 4.4 Q8.1 2.4 9.7 4.4 L9.7 6" fill="none" stroke="#3a3a3a" stroke-width="1.1"/><rect x="6.8" y="7.6" width="2.6" height="1.8" fill="#eeb0a8"/></svg>
<svg style="left:435.5px;top:77.5px;" width="13" height="12" viewBox="0 0 13 12"><path d="M3.6 1.2 L3.6 10.4" stroke="#3a9a8a" stroke-width="1.1"/><path d="M1.6 10.4 L5 10.4" stroke="#3a9a8a" stroke-width="0.9"/><rect x="5.2" y="6" width="5.8" height="5" rx="0.6" fill="#c8382c" stroke="#5a2a26" stroke-width="0.7"/><path d="M6.5 6 L6.5 4.4 Q8.1 2.4 9.7 4.4 L9.7 6" fill="none" stroke="#3a3a3a" stroke-width="1.1"/><rect x="6.8" y="7.6" width="2.6" height="1.8" fill="#eeb0a8"/></svg>
<svg style="left:448.5px;top:77.5px;" width="13" height="12" viewBox="0 0 13 12"><path d="M3.6 1.2 L3.6 10.4 M1.8 3 L5.4 3" stroke="#3a9a8a" stroke-width="1.1"/><path d="M0.8 6.4 L3 6.4" stroke="#555" stroke-width="0.9"/><rect x="5.2" y="6" width="5.8" height="5" rx="0.6" fill="#c8382c" stroke="#5a2a26" stroke-width="0.7"/><path d="M6.5 6 L6.5 4.4 Q8.1 2.4 9.7 4.4 L9.7 6" fill="none" stroke="#3a3a3a" stroke-width="1.1"/><rect x="6.8" y="7.6" width="2.6" height="1.8" fill="#eeb0a8"/></svg>
<svg style="left:463.5px;top:77.5px;" width="13" height="12" viewBox="0 0 13 12"><path d="M3.6 2 L3.6 10.4" stroke="#555" stroke-width="1"/><path d="M1.2 1.4 L6.4 1.4" stroke="#2f7fd6" stroke-width="1.4"/><path d="M1.6 10.4 L5.4 10.4" stroke="#555" stroke-width="0.9"/><rect x="5.2" y="6" width="5.8" height="5" rx="0.6" fill="#c8382c" stroke="#5a2a26" stroke-width="0.7"/><path d="M6.5 6 L6.5 4.4 Q8.1 2.4 9.7 4.4 L9.7 6" fill="none" stroke="#3a3a3a" stroke-width="1.1"/><rect x="6.8" y="7.6" width="2.6" height="1.8" fill="#eeb0a8"/></svg>
<div class="a" style="left:0px;top:93px;width:167px;height:403px;background:#f0f0f0;"></div>
<div class="a" style="left:163.5px;top:93px;width:4px;height:402px;background:linear-gradient(to right,#d0d5dc,#8e9aab);"></div>
<div class="a" style="left:0px;top:93px;width:2px;height:403px;background:#fafafa;"></div>
<div class="a" style="left:2px;top:92.5px;width:162.3px;height:9.3px;background:#c0c0c0;"></div>
<div class="t" style="left:4.00px;top:94.47px;font-size:5.8px;transform:scaleX(0.973);color:#333;">Node Types</div>
<svg style="left:140.90px;top:96.02px" width="4.80" height="2.76" viewBox="0 0 4.80 2.76"><path d="M0 0 L4.80 0 L2.40 2.76 Z" fill="#222"/></svg>
<svg style="left:149px;top:94px;" width="5" height="8" viewBox="0 0 5 8"><rect x="1.4" y="0.6" width="2" height="3.8" fill="#333"/><path d="M0.4 4.6 L4.4 4.6 M2.4 4.6 L2.4 7.4" stroke="#333" stroke-width="0.8"/></svg>
<svg style="left:156px;top:94.6px;" width="7" height="7" viewBox="0 0 7 7"><path d="M0.8 0.8 L5.4 5.4 M5.4 0.8 L0.8 5.4" stroke="#1a1a1a" stroke-width="1.3"/></svg>
<div class="a" style="left:2px;top:102.5px;width:159.5px;height:13px;background:#f2f2f3;"></div>
<div class="a" style="left:4.5px;top:104px;width:10px;height:10.5px;background:#c5dcf6;"></div>
<svg style="left:6px;top:105.5px;" width="8" height="8" viewBox="0 0 8 8"><rect x="1.6" y="0.8" width="4" height="3.6" fill="#e8eef6" stroke="#9ab" stroke-width="0.5"/><path d="M0.8 6.2 L6.6 6.2" stroke="#3f88dc" stroke-width="1.2"/></svg>
<svg style="left:16px;top:104px;" width="10" height="11" viewBox="0 0 10 11"><circle cx="4" cy="3.6" r="2.4" fill="#f0a83a"/><circle cx="6" cy="6.4" r="2.1" fill="#e88a2a"/><circle cx="6.6" cy="7.6" r="1.9" fill="#fff" stroke="#2f7fd6" stroke-width="1.2"/></svg>
<svg style="left:27px;top:104px;" width="10" height="11" viewBox="0 0 10 11"><circle cx="4.4" cy="4.4" r="3" fill="#eaf3fd" stroke="#1b78d6" stroke-width="1.5"/><path d="M6.6 6.8 L8.6 9.2" stroke="#e8a050" stroke-width="1.4"/></svg>
<div class="a" style="left:2px;top:115.5px;width:152px;height:1px;background:#e2e2e2"></div>
<div class="a" style="left:2px;top:116px;width:152.5px;height:367.5px;background:#f0f0f0;"></div>
<div class="a" style="left:154.5px;top:116px;width:6px;height:367.5px;background:#f2f2f2;"></div>
<div class="a" style="left:155.8px;top:125.5px;width:3.8px;height:248px;background:#cbcbcb;"></div>
<svg style="left:155px;top:118px;" width="6" height="5" viewBox="0 0 6 5"><path d="M1 3.6 L2.8 1.4 L4.6 3.6 Z" fill="#777"/></svg>
<svg style="left:155px;top:476px;" width="6" height="5" viewBox="0 0 6 5"><path d="M1 1.2 L2.8 3.4 L4.6 1.2 Z" fill="#444"/></svg>
<div class="t" style="left:5.50px;top:119.27px;font-size:5.8px;transform:scaleX(0.960);font-weight:bold;color:#111;">Geometry</div>
<svg style="left:143.2px;top:117.9px;" width="10.6" height="10.6" viewBox="0 0 10.6 10.6"><circle cx="5.3" cy="5.3" r="4.8" fill="#f2f2f2" stroke="#b8b8b8" stroke-width="0.7"/><path d="M3.1999999999999997 6.199999999999999 L5.3 4.0 L7.4 6.199999999999999" fill="none" stroke="#666" stroke-width="1.2"/></svg>
<div class="a" style="left:13.0px;top:130.6px;width:17.6px;height:17.6px;background:#f6f6f6;border:1px solid #e5e5e5;border-radius:2px;box-shadow:0 0.5px 0.5px rgba(0,0,0,0.08);"></div>
<svg style="left:12.8px;top:130.4px;" width="18" height="18" viewBox="0 0 18 18"><path d="M12.6 5.8 A5.2 5.2 0 0 0 6.2 13.6" fill="none" stroke="#1a1a1a" stroke-width="2"/></svg>
<div class="t" style="left:17.82px;top:149.05px;font-size:5.3px;color:#555;">Arc</div>
<div class="a" style="left:47.599999999999994px;top:130.6px;width:17.6px;height:17.6px;background:#f6f6f6;border:1px solid #e5e5e5;border-radius:2px;box-shadow:0 0.5px 0.5px rgba(0,0,0,0.08);"></div>
<svg style="left:47.39999999999999px;top:130.4px;" width="18" height="18" viewBox="0 0 18 18"><path d="M4.8 12.8 C5.6 6.4 8 7.2 9.2 9.2 C10.6 11.2 13.4 9.8 14.2 5.2" fill="none" stroke="#1a1a1a" stroke-width="2.1"/></svg>
<div class="t" style="left:40.20px;top:149.05px;font-size:5.3px;color:#555;">BSplineCurve</div>
<div class="a" style="left:82.5px;top:130.6px;width:17.6px;height:17.6px;background:#f6f6f6;border:1px solid #e5e5e5;border-radius:2px;box-shadow:0 0.5px 0.5px rgba(0,0,0,0.08);"></div>
<svg style="left:82.3px;top:130.4px;" width="18" height="18" viewBox="0 0 18 18"><path d="M2.8 9 L7.8 4.2 L15 8 L9.4 14 Z" fill="#1a1a1a"/><path d="M5.8 9 L8.4 6.6 L12 8.4 L9.2 11.4 Z" fill="#bdbdbd"/><path d="M7 10 L9.6 7.4 M8.4 10.8 L11 8" stroke="#444" stroke-width="0.6"/></svg>
<div class="t" style="left:75.10px;top:149.05px;font-size:5.3px;color:#555;">BSplineSurf...</div>
<div class="a" style="left:117.0px;top:130.6px;width:17.6px;height:17.6px;background:#f6f6f6;border:1px solid #e5e5e5;border-radius:2px;box-shadow:0 0.5px 0.5px rgba(0,0,0,0.08);"></div>
<svg style="left:116.8px;top:130.4px;" width="18" height="18" viewBox="0 0 18 18"><path d="M9 4.6 L9 13.4 M4.6 9 L13.4 9 M5.9 5.9 L12.1 12.1 M12.1 5.9 L5.9 12.1" stroke="#1a1a1a" stroke-width="0.8"/><circle cx="9" cy="9" r="2" fill="#1a1a1a"/></svg>
<div class="t" style="left:121.24px;top:149.05px;font-size:5.3px;color:#555;">Cell</div>
<div class="a" style="left:13.0px;top:158.28px;width:17.6px;height:17.6px;background:#f6f6f6;border:1px solid #e5e5e5;border-radius:2px;box-shadow:0 0.5px 0.5px rgba(0,0,0,0.08);"></div>
<svg style="left:12.8px;top:158.08px;" width="18" height="18" viewBox="0 0 18 18"><circle cx="9" cy="9" r="4.9" fill="none" stroke="#1a1a1a" stroke-width="2"/></svg>
<div class="t" style="left:15.03px;top:176.73px;font-size:5.3px;color:#555;">Circle</div>
<div class="a" style="left:47.599999999999994px;top:158.28px;width:17.6px;height:17.6px;background:#f6f6f6;border:1px solid #e5e5e5;border-radius:2px;box-shadow:0 0.5px 0.5px rgba(0,0,0,0.08);"></div>
<svg style="left:47.39999999999999px;top:158.08px;" width="18" height="18" viewBox="0 0 18 18"><path d="M8.4 4 L14.4 12 Q10 15.4 4.2 13.2 Z" fill="#1a1a1a"/><ellipse cx="9.4" cy="11.4" rx="2" ry="1.3" fill="#d8d8d8"/></svg>
<div class="t" style="left:50.06px;top:176.73px;font-size:5.3px;color:#555;">Cone</div>
<div class="a" style="left:82.5px;top:158.28px;width:17.6px;height:17.6px;background:#f6f6f6;border:1px solid #e5e5e5;border-radius:2px;box-shadow:0 0.5px 0.5px rgba(0,0,0,0.08);"></div>
<svg style="left:82.3px;top:158.08px;" width="18" height="18" viewBox="0 0 18 18"><path d="M5.2 4.2 L5.2 13.4 L13.8 13.4" fill="none" stroke="#1a1a1a" stroke-width="2"/><path d="M5.8 12.8 L11.8 7" stroke="#1a1a1a" stroke-width="1.2"/></svg>
<div class="t" style="left:76.13px;top:176.73px;font-size:5.3px;color:#555;">Coordinate...</div>
<div class="a" style="left:117.0px;top:158.28px;width:17.6px;height:17.6px;background:#f6f6f6;border:1px solid #e5e5e5;border-radius:2px;box-shadow:0 0.5px 0.5px rgba(0,0,0,0.08);"></div>
<svg style="left:116.8px;top:158.08px;" width="18" height="18" viewBox="0 0 18 18"><path d="M5.6 8.8 Q5.2 4.6 9.4 4.6 Q13.6 4.8 13 9.2 Q12.2 13.2 6.4 14" fill="none" stroke="#1a1a1a" stroke-width="2"/></svg>
<div class="t" style="left:118.73px;top:176.73px;font-size:5.3px;color:#555;">Curve</div>
<div class="a" style="left:13.0px;top:185.95999999999998px;width:17.6px;height:17.6px;background:#f6f6f6;border:1px solid #e5e5e5;border-radius:2px;box-shadow:0 0.5px 0.5px rgba(0,0,0,0.08);"></div>
<svg style="left:12.8px;top:185.76px;" width="18" height="18" viewBox="0 0 18 18"><path d="M14 4 L11 12.4 L9.2 9.6 L4.4 14 L8.4 8.8 L5.6 7.4 Z" fill="#1a1a1a"/></svg>
<div class="t" style="left:11.34px;top:204.41px;font-size:5.3px;color:#555;">Direction</div>
<div class="a" style="left:47.599999999999994px;top:185.95999999999998px;width:17.6px;height:17.6px;background:#f6f6f6;border:1px solid #e5e5e5;border-radius:2px;box-shadow:0 0.5px 0.5px rgba(0,0,0,0.08);"></div>
<svg style="left:47.39999999999999px;top:185.76px;" width="18" height="18" viewBox="0 0 18 18"><ellipse cx="9" cy="9" rx="6" ry="3.3" fill="none" stroke="#1a1a1a" stroke-width="2" transform="rotate(-50 9 9)"/></svg>
<div class="t" style="left:48.59px;top:204.41px;font-size:5.3px;color:#555;">Ellipse</div>
<div class="a" style="left:82.5px;top:185.95999999999998px;width:17.6px;height:17.6px;background:#f6f6f6;border:1px solid #e5e5e5;border-radius:2px;box-shadow:0 0.5px 0.5px rgba(0,0,0,0.08);"></div>
<svg style="left:82.3px;top:185.76px;" width="18" height="18" viewBox="0 0 18 18"><path d="M5.2 13.6 Q4.8 5.6 10.4 4.8 Q14.8 4.8 13.2 9.6" fill="none" stroke="#1a1a1a" stroke-width="2"/></svg>
<div class="t" style="left:77.61px;top:204.41px;font-size:5.3px;color:#555;">EllipticalArc</div>
<div class="a" style="left:117.0px;top:185.95999999999998px;width:17.6px;height:17.6px;background:#f6f6f6;border:1px solid #e5e5e5;border-radius:2px;box-shadow:0 0.5px 0.5px rgba(0,0,0,0.08);"></div>
<svg style="left:116.8px;top:185.76px;" width="18" height="18" viewBox="0 0 18 18"><path d="M4 6.4 L7.2 3.8 L7.2 12 L4 13.8 Z" fill="#666"/><path d="M8 3.8 L10.6 4.8 L10.6 12.6 L8 12 Z" fill="#444"/><path d="M11.4 6 L14.4 7.4 L14.4 13 L11.4 13 Z" fill="#ddd" stroke="#555" stroke-width="0.8"/><path d="M4 9 L7 8 M4 11 L7 10" stroke="#ccc" stroke-width="0.5"/></svg>
<div class="t" style="left:109.30px;top:204.41px;font-size:5.3px;color:#555;">EvaluateSur...</div>
<div class="a" style="left:13.0px;top:213.64px;width:17.6px;height:17.6px;background:#f6f6f6;border:1px solid #e5e5e5;border-radius:2px;box-shadow:0 0.5px 0.5px rgba(0,0,0,0.08);"></div>
<svg style="left:12.8px;top:213.44px;" width="18" height="18" viewBox="0 0 18 18"><circle cx="8.6" cy="9" r="2.1" fill="#1a1a1a"/><circle cx="8.6" cy="4.4" r="1.2" fill="#1a1a1a"/><circle cx="8.6" cy="13.6" r="1.2" fill="#1a1a1a"/><circle cx="4.2" cy="9" r="1.2" fill="#1a1a1a"/><rect x="11.4" y="8" width="3.4" height="2" fill="#1a1a1a"/><path d="M4.2 9 L13 9 M8.6 4.4 L8.6 13.6" stroke="#1a1a1a" stroke-width="0.8"/></svg>
<div class="t" style="left:6.48px;top:232.09px;font-size:5.3px;color:#555;">Fabrication...</div>
<div class="a" style="left:47.599999999999994px;top:213.64px;width:17.6px;height:17.6px;background:#f6f6f6;border:1px solid #e5e5e5;border-radius:2px;box-shadow:0 0.5px 0.5px rgba(0,0,0,0.08);"></div>
<svg style="left:47.39999999999999px;top:213.44px;" width="18" height="18" viewBox="0 0 18 18"><path d="M4.8 13.4 L13.4 4.8" stroke="#1a1a1a" stroke-width="2"/></svg>
<div class="t" style="left:51.39px;top:232.09px;font-size:5.3px;color:#555;">Line</div>
<div class="a" style="left:82.5px;top:213.64px;width:17.6px;height:17.6px;background:#f6f6f6;border:1px solid #e5e5e5;border-radius:2px;box-shadow:0 0.5px 0.5px rgba(0,0,0,0.08);"></div>
<svg style="left:82.3px;top:213.44px;" width="18" height="18" viewBox="0 0 18 18"><circle cx="9" cy="9" r="4.8" fill="#dcdcdc" stroke="#2a2a2a" stroke-width="1.1"/><path d="M4.2 9 L13.8 9 M9 4.2 L9 13.8 M5.6 5.8 Q9 8 12.4 5.8 M5.6 12.2 Q9 10 12.4 12.2" fill="none" stroke="#2a2a2a" stroke-width="0.7"/></svg>
<div class="t" style="left:84.82px;top:232.09px;font-size:5.3px;color:#555;">Mesh</div>
<div class="a" style="left:117.0px;top:213.64px;width:17.6px;height:17.6px;background:#f6f6f6;border:1px solid #e5e5e5;border-radius:2px;box-shadow:0 0.5px 0.5px rgba(0,0,0,0.08);"></div>
<svg style="left:116.8px;top:213.44px;" width="18" height="18" viewBox="0 0 18 18"><path d="M6.4 5 L11.6 5 L14 13 L4 13 Z" fill="#f4f4f4" stroke="#1a1a1a" stroke-width="2"/></svg>
<div class="t" style="left:119.02px;top:232.09px;font-size:5.3px;color:#555;">Plane</div>
<div class="a" style="left:13.0px;top:241.32px;width:17.6px;height:17.6px;background:#f6f6f6;border:1px solid #e5e5e5;border-radius:2px;box-shadow:0 0.5px 0.5px rgba(0,0,0,0.08);"></div>
<svg style="left:12.8px;top:241.12px;" width="18" height="18" viewBox="0 0 18 18"><circle cx="9" cy="9" r="1.4" fill="#1a1a1a"/></svg>
<div class="t" style="left:15.76px;top:259.77px;font-size:5.3px;color:#555;">Point</div>
<div class="a" style="left:47.599999999999994px;top:241.32px;width:17.6px;height:17.6px;background:#f6f6f6;border:1px solid #e5e5e5;border-radius:2px;box-shadow:0 0.5px 0.5px rgba(0,0,0,0.08);"></div>
<svg style="left:47.39999999999999px;top:241.12px;" width="18" height="18" viewBox="0 0 18 18"><path d="M9 3.8 L14.2 9 L9 14.2 L3.8 9 Z" fill="#fafafa" stroke="#1a1a1a" stroke-width="1.8"/></svg>
<div class="t" style="left:46.82px;top:259.77px;font-size:5.3px;color:#555;">Polygon</div>
<div class="a" style="left:82.5px;top:241.32px;width:17.6px;height:17.6px;background:#f6f6f6;border:1px solid #e5e5e5;border-radius:2px;box-shadow:0 0.5px 0.5px rgba(0,0,0,0.08);"></div>
<svg style="left:82.3px;top:241.12px;" width="18" height="18" viewBox="0 0 18 18"><path d="M5.4 4.8 L12.8 5.8 L6.4 9.6 L12.6 13.4" fill="none" stroke="#1a1a1a" stroke-width="2.2"/></svg>
<div class="t" style="left:81.13px;top:259.77px;font-size:5.3px;color:#555;">PolyLine</div>
<div class="a" style="left:117.0px;top:241.32px;width:17.6px;height:17.6px;background:#f6f6f6;border:1px solid #e5e5e5;border-radius:2px;box-shadow:0 0.5px 0.5px rgba(0,0,0,0.08);"></div>
<svg style="left:116.8px;top:241.12px;" width="18" height="18" viewBox="0 0 18 18"><rect x="4.4" y="4.4" width="1.7" height="1.7" fill="#4a4a4a"/><rect x="8.2" y="4.4" width="1.7" height="1.7" fill="#4a4a4a"/><rect x="12.0" y="4.4" width="1.7" height="1.7" fill="#4a4a4a"/><rect x="4.4" y="8.2" width="1.7" height="1.7" fill="#4a4a4a"/><rect x="12.0" y="8.2" width="1.7" height="1.7" fill="#4a4a4a"/><rect x="4.4" y="12.0" width="1.7" height="1.7" fill="#4a4a4a"/><rect x="8.2" y="12.0" width="1.7" height="1.7" fill="#4a4a4a"/><rect x="12.0" y="12.0" width="1.7" height="1.7" fill="#4a4a4a"/></svg>
<div class="t" style="left:117.99px;top:259.77px;font-size:5.3px;color:#555;">Range</div>
<div class="a" style="left:13.0px;top:269.0px;width:17.6px;height:17.6px;background:#f6f6f6;border:1px solid #e5e5e5;border-radius:2px;box-shadow:0 0.5px 0.5px rgba(0,0,0,0.08);"></div>
<svg style="left:12.8px;top:268.8px;" width="18" height="18" viewBox="0 0 18 18"><circle cx="8.8" cy="9" r="5.2" fill="#1a1a1a"/><ellipse cx="10.2" cy="7.2" rx="2.6" ry="2.1" fill="#f4f4f4"/></svg>
<div class="t" style="left:15.91px;top:287.45px;font-size:5.3px;color:#555;">Solid</div>
<div class="a" style="left:47.599999999999994px;top:269.0px;width:17.6px;height:17.6px;background:#f6f6f6;border:1px solid #e5e5e5;border-radius:2px;box-shadow:0 0.5px 0.5px rgba(0,0,0,0.08);"></div>
<svg style="left:47.39999999999999px;top:268.8px;" width="18" height="18" viewBox="0 0 18 18"></svg>
<div class="t" style="left:52.61px;top:271.96px;font-size:10.5px;color:#222;font-family:'Liberation Serif',serif;">A</div>
<div class="t" style="left:51.54px;top:287.45px;font-size:5.3px;color:#555;">Text</div>
<div class="a" style="left:4px;top:297.5px;width:150px;height:1px;background:#e0e0e0"></div>
<div class="t" style="left:5.50px;top:299.27px;font-size:5.8px;transform:scaleX(0.924);font-weight:bold;color:#111;">OpenBuildings Designer</div>
<svg style="left:143.5px;top:298.7px;" width="10.6" height="10.6" viewBox="0 0 10.6 10.6"><circle cx="5.3" cy="5.3" r="4.8" fill="#f2f2f2" stroke="#b8b8b8" stroke-width="0.7"/><path d="M3.1999999999999997 6.199999999999999 L5.3 4.0 L7.4 6.199999999999999" fill="none" stroke="#666" stroke-width="1.2"/></svg>
<div class="a" style="left:13.0px;top:310.4px;width:17.6px;height:17.6px;background:#f6f6f6;border:1px solid #e5e5e5;border-radius:2px;box-shadow:0 0.5px 0.5px rgba(0,0,0,0.08);"></div>
<svg style="left:12.8px;top:310.2px;" width="18" height="18" viewBox="0 0 18 18"><path d="M2.8 6 L9.6 3 L15 5.4 L15 12.2 L8.6 15 L2.8 12.8 Z" fill="#c4c4c4" stroke="#666" stroke-width="0.8"/><path d="M8.6 8 L8.6 15 M2.8 6 L8.6 8 L15 5.4 M2.8 8.2 L8.6 10.2 L15 7.6 M2.8 10.4 L8.6 12.4 L15 9.8" fill="none" stroke="#777" stroke-width="0.6"/></svg>
<div class="t" style="left:12.37px;top:328.85px;font-size:5.3px;color:#555;">Building</div>
<div class="a" style="left:47.599999999999994px;top:310.4px;width:17.6px;height:17.6px;background:#f6f6f6;border:1px solid #e5e5e5;border-radius:2px;box-shadow:0 0.5px 0.5px rgba(0,0,0,0.08);"></div>
<svg style="left:47.39999999999999px;top:310.2px;" width="18" height="18" viewBox="0 0 18 18"><rect x="7.4" y="2.6" width="7.4" height="9" fill="#444"/><rect x="8.4" y="2.6" width="6.4" height="8" fill="#5a5a5a"/><path d="M5.2 12 L5.2 9.4 L8 9.4" fill="none" stroke="#111" stroke-width="1.2"/><circle cx="5.4" cy="12.6" r="1.9" fill="#fff" stroke="#111" stroke-width="1.2"/></svg>
<div class="t" style="left:41.37px;top:328.85px;font-size:5.3px;color:#555;">BuildingCo...</div>
<div class="a" style="left:82.5px;top:310.4px;width:17.6px;height:17.6px;background:#f6f6f6;border:1px solid #e5e5e5;border-radius:2px;box-shadow:0 0.5px 0.5px rgba(0,0,0,0.08);"></div>
<svg style="left:82.3px;top:310.2px;" width="18" height="18" viewBox="0 0 18 18"><path d="M9 3.4 L9 14.6 M3.4 9 L14.6 9 M5 5 L13 13 M13 5 L5 13" stroke="#777" stroke-width="0.6"/><path d="M9 6.4 L10 8 L11.6 9 L10 10 L9 11.6 L8 10 L6.4 9 L8 8 Z" fill="#444"/></svg>
<div class="t" style="left:76.13px;top:328.85px;font-size:5.3px;color:#555;">Compound...</div>
<div class="a" style="left:117.0px;top:310.4px;width:17.6px;height:17.6px;background:#f6f6f6;border:1px solid #e5e5e5;border-radius:2px;box-shadow:0 0.5px 0.5px rgba(0,0,0,0.08);"></div>
<svg style="left:116.8px;top:310.2px;" width="18" height="18" viewBox="0 0 18 18"><rect x="5" y="3" width="7.8" height="11.6" fill="#2a2a2a"/><rect x="7.6" y="4.6" width="2.6" height="2.6" fill="#ddd"/><rect x="7.4" y="8.6" width="3" height="4.8" fill="#f0f0f0"/></svg>
<div class="t" style="left:120.06px;top:328.85px;font-size:5.3px;color:#555;">Door</div>
<div class="a" style="left:13.0px;top:338.2px;width:17.6px;height:17.6px;background:#f6f6f6;border:1px solid #e5e5e5;border-radius:2px;box-shadow:0 0.5px 0.5px rgba(0,0,0,0.08);"></div>
<svg style="left:12.8px;top:338.0px;" width="18" height="18" viewBox="0 0 18 18"><path d="M4 7 L9.4 4.6 L14 6.2 L14 12.4 L8.6 14.8 L4 13 Z" fill="#b4b4b4" stroke="#5a5a5a" stroke-width="0.8"/><path d="M4 9 L8.6 10.6 L14 8.2 M4 11 L8.6 12.6 L14 10.2 M8.6 8.6 L8.6 14.8 M4 7 L8.6 8.6 L14 6.2" fill="none" stroke="#5a5a5a" stroke-width="0.7"/></svg>
<div class="t" style="left:15.76px;top:356.65px;font-size:5.3px;color:#555;">Floor</div>
<div class="a" style="left:47.599999999999994px;top:338.2px;width:17.6px;height:17.6px;background:#f6f6f6;border:1px solid #e5e5e5;border-radius:2px;box-shadow:0 0.5px 0.5px rgba(0,0,0,0.08);"></div>
<svg style="left:47.39999999999999px;top:338.0px;" width="18" height="18" viewBox="0 0 18 18"><path d="M3.6 9 L8.4 4.6 L14.6 8.4 L14.6 13.2 L8.6 14.2 L3.6 13 Z M3.6 9 L8.6 10.2 L14.6 8.4 M8.6 10.2 L8.6 14.2" fill="#f4f4f4" stroke="#3a3a3a" stroke-width="1"/><path d="M10.4 10.4 L13 9.8 L13 13.2 L10.4 13.6 Z" fill="none" stroke="#3a3a3a" stroke-width="0.8"/></svg>
<div class="t" style="left:44.77px;top:356.65px;font-size:5.3px;color:#555;">FreeForm</div>
<div class="a" style="left:82.5px;top:338.2px;width:17.6px;height:17.6px;background:#f6f6f6;border:1px solid #e5e5e5;border-radius:2px;box-shadow:0 0.5px 0.5px rgba(0,0,0,0.08);"></div>
<svg style="left:82.3px;top:338.0px;" width="18" height="18" viewBox="0 0 18 18"><rect x="5" y="6" width="9.4" height="8.4" fill="#d8d8d8"/><path d="M5 6 L5 14.4 M8 6 L8 14.4 M11.2 6 L11.2 14.4 M14.4 6 L14.4 14.4 M5 6 L14.4 6 M5 8.8 L14.4 8.8 M5 11.6 L14.4 11.6 M5 14.4 L14.4 14.4" stroke="#555" stroke-width="0.8"/><circle cx="8" cy="4.2" r="1.3" fill="#444"/><circle cx="11.2" cy="4.2" r="1.3" fill="#444"/><circle cx="14.2" cy="4.2" r="1.3" fill="#444"/><rect x="3" y="8" width="1.8" height="1.6" fill="#444"/><rect x="3" y="11" width="1.8" height="1.6" fill="#444"/></svg>
<div class="t" style="left:86.29px;top:356.65px;font-size:5.3px;color:#555;">Grid</div>
<div class="a" style="left:117.0px;top:338.2px;width:17.6px;height:17.6px;background:#f6f6f6;border:1px solid #e5e5e5;border-radius:2px;box-shadow:0 0.5px 0.5px rgba(0,0,0,0.08);"></div>
<svg style="left:116.8px;top:338.0px;" width="18" height="18" viewBox="0 0 18 18"><path d="M4 11.4 L9 9.2 L14.2 11.4 L9 14.2 Z" fill="#e4e4e4" stroke="#555" stroke-width="0.8"/><path d="M4 9.2 L9 7 L14.2 9.2 L9 12 Z" fill="#d0d0d0" stroke="#555" stroke-width="0.8"/><path d="M4 7 L9 4.8 L14.2 7 L9 9.8 Z" fill="#bcbcbc" stroke="#444" stroke-width="0.8"/><path d="M5.6 3.6 L9.2 2.8 L9.2 6 Z" fill="#2a2a2a"/></svg>
<div class="t" style="left:120.50px;top:356.65px;font-size:5.3px;color:#555;">Plan</div>
<div class="a" style="left:13.0px;top:366.0px;width:17.6px;height:17.6px;background:#f6f6f6;border:1px solid #e5e5e5;border-radius:2px;box-shadow:0 0.5px 0.5px rgba(0,0,0,0.08);"></div>
<svg style="left:12.8px;top:365.8px;" width="18" height="18" viewBox="0 0 18 18"><path d="M3.4 9 L14.8 9" stroke="#1a1a1a" stroke-width="1.1"/><circle cx="11.4" cy="9" r="2.7" fill="#f4f4f4" stroke="#1a1a1a" stroke-width="1.2"/><path d="M9 9 L13.8 9" stroke="#1a1a1a" stroke-width="0.8"/><circle cx="4.4" cy="8.4" r="1.2" fill="#1a1a1a"/></svg>
<div class="t" style="left:12.96px;top:384.45px;font-size:5.3px;color:#555;">Section</div>
<div class="a" style="left:47.599999999999994px;top:366.0px;width:17.6px;height:17.6px;background:#f6f6f6;border:1px solid #e5e5e5;border-radius:2px;box-shadow:0 0.5px 0.5px rgba(0,0,0,0.08);"></div>
<svg style="left:47.39999999999999px;top:365.8px;" width="18" height="18" viewBox="0 0 18 18"><path d="M3.4 9.4 L9.8 4.6 L15 7.4 L8.6 12.4 Z" fill="#f0f0f0" stroke="#1a1a1a" stroke-width="1.5"/><path d="M3.4 9.4 L3.4 11.2 L8.6 14.4 L15 9.2 L15 7.4 M8.6 12.4 L8.6 14.4" fill="#777" stroke="#1a1a1a" stroke-width="1.2"/></svg>
<div class="t" style="left:51.10px;top:384.45px;font-size:5.3px;color:#555;">Slab</div>
<div class="a" style="left:82.5px;top:366.0px;width:17.6px;height:17.6px;background:#f6f6f6;border:1px solid #e5e5e5;border-radius:2px;box-shadow:0 0.5px 0.5px rgba(0,0,0,0.08);"></div>
<svg style="left:82.3px;top:365.8px;" width="18" height="18" viewBox="0 0 18 18"><rect x="4" y="3.6" width="10" height="10.8" fill="#b8b8b8" stroke="#222" stroke-width="1.4"/><path d="M9 3.6 L9 8.6 L4 8.6 M9 8.6 L14 8.6 M9 8.6 L9 11" stroke="#222" stroke-width="1.1"/><rect x="9.6" y="9.4" width="3.8" height="4.4" fill="#666"/><rect x="4.8" y="9.4" width="3.4" height="4.2" fill="#ddd"/></svg>
<div class="t" style="left:83.79px;top:384.45px;font-size:5.3px;color:#555;">Space</div>
<div class="a" style="left:117.0px;top:366.0px;width:17.6px;height:17.6px;background:#f6f6f6;border:1px solid #e5e5e5;border-radius:2px;box-shadow:0 0.5px 0.5px rgba(0,0,0,0.08);"></div>
<svg style="left:116.8px;top:365.8px;" width="18" height="18" viewBox="0 0 18 18"><path d="M3.8 6.8 L9 3.8 L14.2 6.8 L9 9.8 Z" fill="#f4f4f4" stroke="#1a1a1a" stroke-width="1.5"/><path d="M3.8 10.6 L9 7.6 L14.2 10.6 L9 14 Z" fill="#f4f4f4" stroke="#1a1a1a" stroke-width="1.5"/></svg>
<div class="t" style="left:110.04px;top:384.45px;font-size:5.3px;color:#555;">StructuralM...</div>
<div class="a" style="left:13.0px;top:393.79999999999995px;width:17.6px;height:17.6px;background:#f6f6f6;border:1px solid #e5e5e5;border-radius:2px;box-shadow:0 0.5px 0.5px rgba(0,0,0,0.08);"></div>
<svg style="left:12.8px;top:393.59999999999997px;" width="18" height="18" viewBox="0 0 18 18"><path d="M4 7.6 L11.2 4 L14 5 L14 10.6 L6.8 14.4 L4 13.2 Z" fill="#e8e8e8" stroke="#1a1a1a" stroke-width="1.5"/><path d="M4 7.6 L6.8 8.8 L14 5 M6.8 8.8 L6.8 14.4" fill="none" stroke="#1a1a1a" stroke-width="1.1"/></svg>
<div class="t" style="left:16.75px;top:412.25px;font-size:5.3px;color:#555;">Wall</div>
<div class="a" style="left:47.599999999999994px;top:393.79999999999995px;width:17.6px;height:17.6px;background:#f6f6f6;border:1px solid #e5e5e5;border-radius:2px;box-shadow:0 0.5px 0.5px rgba(0,0,0,0.08);"></div>
<svg style="left:47.39999999999999px;top:393.59999999999997px;" width="18" height="18" viewBox="0 0 18 18"><rect x="4.4" y="3.4" width="9" height="11.2" fill="#333"/><rect x="5.8" y="4.8" width="2.6" height="3.6" fill="#f0f0f0"/><rect x="9.6" y="4.8" width="2.6" height="3.6" fill="#f0f0f0"/><rect x="5.8" y="9.6" width="2.6" height="3.6" fill="#f0f0f0"/><rect x="9.6" y="9.6" width="2.6" height="3.6" fill="#f0f0f0"/></svg>
<div class="t" style="left:46.97px;top:412.25px;font-size:5.3px;color:#555;">Window</div>
<div class="a" style="left:4px;top:422px;width:150px;height:1px;background:#e0e0e0"></div>
<div class="t" style="left:5.50px;top:424.06px;font-size:5.8px;transform:scaleX(0.900);font-weight:bold;color:#111;">Utility</div>
<svg style="left:143.5px;top:423.3px;" width="10.6" height="10.6" viewBox="0 0 10.6 10.6"><circle cx="5.3" cy="5.3" r="4.8" fill="#f2f2f2" stroke="#b8b8b8" stroke-width="0.7"/><path d="M3.1999999999999997 6.199999999999999 L5.3 4.0 L7.4 6.199999999999999" fill="none" stroke="#666" stroke-width="1.2"/></svg>
<div class="a" style="left:13.0px;top:436px;width:17.6px;height:17.6px;background:#f6f6f6;border:1px solid #e5e5e5;border-radius:2px;box-shadow:0 0.5px 0.5px rgba(0,0,0,0.08);"></div>
<svg style="left:12.8px;top:435.8px;" width="18" height="18" viewBox="0 0 18 18"><rect x="4" y="4" width="10" height="10" fill="#fff" stroke="#aaa" stroke-width="0.6"/><rect x="4" y="4" width="5" height="5" fill="#ddd"/><circle cx="6.6" cy="11.4" r="2.2" fill="#1a1a1a"/><circle cx="11.6" cy="8.6" r="1.6" fill="#1a1a1a"/><circle cx="9" cy="5.6" r="1.2" fill="#1a1a1a"/></svg>
<div class="t" style="left:7.07px;top:453.85px;font-size:5.3px;color:#555;">BubbleChart</div>
<div class="a" style="left:47.599999999999994px;top:436px;width:17.6px;height:17.6px;background:#f6f6f6;border:1px solid #e5e5e5;border-radius:2px;box-shadow:0 0.5px 0.5px rgba(0,0,0,0.08);"></div>
<svg style="left:47.39999999999999px;top:435.8px;" width="18" height="18" viewBox="0 0 18 18"><rect x="3.4" y="5.2" width="10.8" height="7.2" rx="0.6" fill="#1a1a1a"/><ellipse cx="9" cy="8.6" rx="2.8" ry="1.8" fill="#f4f4f4"/></svg>
<div class="t" style="left:46.97px;top:453.85px;font-size:5.3px;color:#555;">Camera</div>
<div class="a" style="left:82.5px;top:436px;width:17.6px;height:17.6px;background:#f6f6f6;border:1px solid #e5e5e5;border-radius:2px;box-shadow:0 0.5px 0.5px rgba(0,0,0,0.08);"></div>
<svg style="left:82.3px;top:435.8px;" width="18" height="18" viewBox="0 0 18 18"><path d="M5.4 5.6 L8 4.2 M10.4 4 L13 5.2 M14 7.4 L13.6 10.4 M12.6 12.6 L10 13.8 M7.6 13.8 L5 12.6 M4.2 10.4 L4.6 7.6" stroke="#1a1a1a" stroke-width="2"/></svg>
<div class="t" style="left:77.90px;top:453.85px;font-size:5.3px;color:#555;">ClipVolume</div>
<div class="a" style="left:117.0px;top:436px;width:17.6px;height:17.6px;background:#f6f6f6;border:1px solid #e5e5e5;border-radius:2px;box-shadow:0 0.5px 0.5px rgba(0,0,0,0.08);"></div>
<svg style="left:116.8px;top:435.8px;" width="18" height="18" viewBox="0 0 18 18"><path d="M4.4 5.6 L9.6 5.6 L9.6 10 L4.4 10 Z M6 4 L11 4 L11 8.4 M4.4 5.6 L6 4 M9.6 5.6 L11 4" fill="none" stroke="#777" stroke-width="0.7"/><path d="M10 11.4 L14.4 11.4 M10 13.6 L14.4 13.6" stroke="#555" stroke-width="1.1" stroke-dasharray="1.6 0.9"/><path d="M8.4 10 L8.4 12.4" stroke="#555" stroke-width="0.9"/></svg>
<div class="t" style="left:110.19px;top:453.85px;font-size:5.3px;color:#555;">ClipVolume...</div>
<div class="a" style="left:13.0px;top:463.6px;width:17.6px;height:17.6px;background:#f6f6f6;border:1px solid #e5e5e5;border-radius:2px;box-shadow:0 0.5px 0.5px rgba(0,0,0,0.08);"></div>
<svg style="left:12.8px;top:463.40000000000003px;" width="18" height="18" viewBox="0 0 18 18"><circle cx="9" cy="9" r="4.8" fill="#1a1a1a"/><path d="M11.6 5.6 L8.6 8.8 L11.6 12.4" fill="none" stroke="#eee" stroke-width="1.3"/></svg>
<div class="a" style="left:47.599999999999994px;top:463.6px;width:17.6px;height:17.6px;background:#f6f6f6;border:1px solid #e5e5e5;border-radius:2px;box-shadow:0 0.5px 0.5px rgba(0,0,0,0.08);"></div>
<svg style="left:47.39999999999999px;top:463.40000000000003px;" width="18" height="18" viewBox="0 0 18 18"><rect x="5.4" y="7.6" width="7.2" height="5.6" fill="#2a2a2a"/><rect x="6.4" y="6" width="5.2" height="1.2" fill="#555"/></svg>
<div class="a" style="left:82.5px;top:463.6px;width:17.6px;height:17.6px;background:#f6f6f6;border:1px solid #e5e5e5;border-radius:2px;box-shadow:0 0.5px 0.5px rgba(0,0,0,0.08);"></div>
<svg style="left:82.3px;top:463.40000000000003px;" width="18" height="18" viewBox="0 0 18 18"><path d="M5.6 12.6 L5.6 7.4 Q5.6 5.8 7.4 5.8 L12.4 5.8" fill="none" stroke="#333" stroke-width="1"/><circle cx="5.6" cy="12.6" r="1.8" fill="#1a1a1a"/><circle cx="12.6" cy="5.8" r="1.2" fill="#1a1a1a"/></svg>
<div class="a" style="left:117.0px;top:463.6px;width:17.6px;height:17.6px;background:#f6f6f6;border:1px solid #e5e5e5;border-radius:2px;box-shadow:0 0.5px 0.5px rgba(0,0,0,0.08);"></div>
<svg style="left:116.8px;top:463.40000000000003px;" width="18" height="18" viewBox="0 0 18 18"><path d="M13.4 4.6 L13.4 12 L10.4 12" fill="none" stroke="#333" stroke-width="1"/><circle cx="6" cy="12.2" r="1.6" fill="#1a1a1a"/><circle cx="9.4" cy="12.4" r="1.1" fill="#1a1a1a"/></svg>
<div class="a" style="left:0px;top:483.5px;width:167.5px;height:11.5px;background:#8e9aaa;"></div>
<div class="a" style="left:2px;top:483.5px;width:161px;height:1px;background:#dfe3e8;"></div>
<div class="a" style="left:5px;top:485px;width:37.5px;height:10px;background:#e2e7ee;border:1px solid #f8fafc;border-bottom:none;"></div>
<div class="t" style="left:8.50px;top:486.87px;font-size:5.8px;transform:scaleX(0.973);color:#4a5260;">Node Types</div>
<div class="a" style="left:44.5px;top:485px;width:37px;height:9px;background:#cfd6df;border:1px solid #e6eaef;"></div>
<div class="t" style="left:47.00px;top:486.06px;font-size:5.8px;transform:scaleX(0.985);color:#4a5260;">Transactions</div>
<div class="a" style="left:0px;top:483.5px;width:2px;height:11.5px;background:#f6f6f6;"></div>
<div class="a" style="left:167.5px;top:92px;width:795.5px;height:241px;background:#a9c3e6;border-radius:2px 2px 0 0;background:linear-gradient(#9ab8e1,#bdd3f0 16px,#b4cdec 17px,#b4cdec);"></div>
<div class="a" style="left:167.5px;top:92px;width:795.5px;height:1px;background:#84a0c6;"></div>
<div class="a" style="left:167.5px;top:329.2px;width:795.5px;height:2.6px;background:#bcd5ec;"></div>
<div class="a" style="left:165.5px;top:331.8px;width:797.5px;height:1.9px;background:#647f99;"></div>
<div class="a" style="left:165.5px;top:333.7px;width:797.5px;height:2px;background:#9a9ca2;"></div>
<div class="a" style="left:171px;top:108px;width:788.5px;height:10.6px;background:#eff2f6;"></div>
<div class="a" style="left:171px;top:118.5px;width:788.5px;height:210.7px;background:#ffffff;"></div>
<div class="a" style="left:170.3px;top:108px;width:0.7px;height:221px;background:#8faed6;"></div>
<div class="a" style="left:959.5px;top:108px;width:0.7px;height:221px;background:#8faed6;"></div>
<svg style="left:172.5px;top:99px;" width="7" height="6" viewBox="0 0 7 6"><rect x="0.4" y="0.6" width="5.6" height="4.4" rx="0.8" fill="#2a6fd4"/><rect x="1.2" y="1.2" width="3.6" height="1.4" fill="#9cc4f6"/></svg>
<div class="t" style="left:182.00px;top:98.87px;font-size:5.8px;transform:scaleX(1.033);color:#2a3646;">View 1 - Isometric, Design Model</div>
<div class="a" style="left:909.3px;top:97.4px;width:15.2px;height:9.2px;border:1px solid #8ea6ca;border-radius:1.5px;background:linear-gradient(#bdd0ea,#a9c0e0);"></div>
<div class="a" style="left:913.5px;top:101.4px;width:6.4px;height:2.4px;background:#c8d6ea;border:1px solid #8a9ab4;"></div>
<div class="a" style="left:926.2px;top:97.4px;width:15.2px;height:9.2px;border:1px solid #8ea6ca;border-radius:1.5px;background:linear-gradient(#bdd0ea,#a9c0e0);"></div>
<div class="a" style="left:930.6px;top:99.8px;width:6px;height:4.2px;background:#c8d6ea;border:1px solid #7f8fa8;"></div>
<div class="a" style="left:943px;top:97.4px;width:15.8px;height:9.2px;border:1px solid #a86050;border-radius:1.5px;background:linear-gradient(#e89880,#d4583a 50%,#cc4a2c);"></div>
<svg style="left:947.5px;top:99px;" width="7" height="6" viewBox="0 0 7 6"><path d="M0.8 0.8 L5.4 4.8 M5.4 0.8 L0.8 4.8" stroke="#fff" stroke-width="1.4"/></svg>
<svg style="left:173.1px;top:110.0px;" width="8.8" height="8.8" viewBox="0 0 10 10"><rect x="0.6" y="1" width="8.4" height="7.4" fill="#eaf2fc" stroke="#2f7fd6" stroke-width="0.9"/><rect x="0.6" y="1" width="8.4" height="2" fill="#2f7fd6"/><rect x="2" y="5" width="4.4" height="2.6" fill="#6aa6e8"/></svg>
<svg style="left:184.90px;top:113.48px" width="3.20" height="1.84" viewBox="0 0 3.20 1.84"><path d="M0 0 L3.20 0 L1.60 1.84 Z" fill="#222"/></svg>
<svg style="left:192.1px;top:110.0px;" width="8.8" height="8.8" viewBox="0 0 10 10"><circle cx="3.4" cy="6" r="2.6" fill="#d8ecfa" stroke="#7ab8e8" stroke-width="0.9"/><path d="M3.4 2.4 L7.4 0.8 L7.4 8.6" fill="none" stroke="#8cc86a" stroke-width="1.1"/><rect x="6.6" y="8.4" width="1.8" height="1.2" fill="#222"/></svg>
<svg style="left:203.1px;top:110.0px;" width="8.8" height="8.8" viewBox="0 0 10 10"><circle cx="4.6" cy="4.2" r="2.8" fill="#c8d4de" stroke="#8a9aa8" stroke-width="0.8"/><circle cx="4.6" cy="4.2" r="1.1" fill="#5a6a78"/><path d="M4.6 0.4 L4.6 8 M0.8 4.2 L8.4 4.2" stroke="#9aa8b4" stroke-width="0.7"/><rect x="3.6" y="7.4" width="2" height="1.6" fill="#6a7884"/></svg>
<svg style="left:214.70px;top:113.48px" width="3.20" height="1.84" viewBox="0 0 3.20 1.84"><path d="M0 0 L3.20 0 L1.60 1.84 Z" fill="#222"/></svg>
<div class="a" style="left:221px;top:109px;width:1px;height:9px;background:#cfd6de"></div>
<svg style="left:224.98px;top:110.0px;" width="7.04" height="8.8" viewBox="0 0 8 10"><path d="M3 0.8 L5 0.8 L5 4 L7.2 8.6 L0.8 8.6 L3 4 Z" fill="#5a90d8"/><path d="M2 6.4 L6 6.4 L7.2 8.6 L0.8 8.6 Z" fill="#2f62b4"/></svg>
<svg style="left:235.1px;top:110.0px;" width="8.8" height="8.8" viewBox="0 0 10 10"><circle cx="5.4" cy="3.6" r="2.8" fill="#dde6f0" stroke="#666" stroke-width="0.9"/><path d="M3.4 5.8 L0.8 8.6" stroke="#e08a28" stroke-width="1.6"/><path d="M4 3.6 L6.8 3.6 M5.4 2.2 L5.4 5" stroke="#444" stroke-width="0.8"/></svg>
<svg style="left:246.1px;top:110.0px;" width="8.8" height="8.8" viewBox="0 0 10 10"><circle cx="5.4" cy="3.6" r="2.8" fill="#dde6f0" stroke="#666" stroke-width="0.9"/><path d="M3.4 5.8 L0.8 8.6" stroke="#e08a28" stroke-width="1.6"/><path d="M4 3.6 L6.8 3.6" stroke="#444" stroke-width="0.8"/></svg>
<svg style="left:257.1px;top:110.0px;" width="8.8" height="8.8" viewBox="0 0 10 10"><rect x="0.6" y="0.8" width="8.4" height="8" fill="#f4f6fa" stroke="#777" stroke-width="0.8"/><circle cx="5" cy="4" r="2.2" fill="#dde6f0" stroke="#555" stroke-width="0.8"/><path d="M3.6 5.8 L2 7.6" stroke="#e08a28" stroke-width="1.2"/></svg>
<svg style="left:268.16px;top:110.0px;" width="9.68" height="8.8" viewBox="0 0 11 10"><rect x="0.6" y="0.6" width="9.4" height="8.4" rx="0.8" fill="#3f8ae0"/><rect x="2" y="2" width="6.6" height="5.6" rx="2.2" fill="#fff"/></svg>
<svg style="left:280.16px;top:110.0px;" width="9.68" height="8.8" viewBox="0 0 11 10"><path d="M0.8 4.4 L4.4 1.8 L4.4 7 Z" fill="#2f7fd6"/><rect x="4.4" y="3.4" width="2.2" height="2" fill="#2f7fd6"/><path d="M8.4 1 L8.4 8.6 M7.2 8.6 L9.8 8.6" stroke="#333" stroke-width="1"/></svg>
<svg style="left:291.1px;top:110.0px;" width="8.8" height="8.8" viewBox="0 0 10 10"><path d="M2 3 Q5 -0.6 8 3.4 L8 7.6 Q5 9.6 2 7.6 Z" fill="#f4f4f4" stroke="#555" stroke-width="0.8"/><path d="M1 2.4 L3.4 2.6 L2.4 4.6 Z" fill="#333"/></svg>
<div class="a" style="left:302px;top:109px;width:1px;height:9px;background:#cfd6de"></div>
<svg style="left:305.1px;top:110.0px;" width="8.8" height="8.8" viewBox="0 0 10 10"><ellipse cx="2.8" cy="4" rx="1.5" ry="2.8" fill="#111"/><ellipse cx="6.8" cy="5.4" rx="1.5" ry="2.8" fill="#111"/></svg>
<svg style="left:316.1px;top:110.0px;" width="8.8" height="8.8" viewBox="0 0 10 10"><path d="M1.4 3 L6 2 L8.6 5.6 L4 7 Z" fill="#f0f0f0" stroke="#b8b8b8" stroke-width="0.8"/></svg>
<svg style="left:327.1px;top:110.0px;" width="8.8" height="8.8" viewBox="0 0 10 10"><rect x="1" y="1.4" width="7.8" height="6" fill="#eef2f8" stroke="#7a8aa0" stroke-width="0.8"/><path d="M1 2 L8.8 2" stroke="#2f7fd6" stroke-width="1.2"/><path d="M4 6 L7 4.4 L7 7.6 Z" fill="#333"/></svg>
<svg style="left:338.1px;top:110.0px;" width="8.8" height="8.8" viewBox="0 0 10 10"><rect x="0.8" y="1.4" width="8.4" height="6.6" fill="#dcebfb" stroke="#2f7fd6" stroke-width="0.9"/><rect x="0.8" y="1.4" width="8.4" height="1.6" fill="#2f7fd6"/><path d="M3 5.4 L5.6 4 L5.6 6.8 Z" fill="#2f7fd6"/></svg>
<svg style="left:349.1px;top:110.0px;" width="8.8" height="8.8" viewBox="0 0 10 10"><rect x="0.8" y="1.4" width="8.4" height="6.6" fill="#dcebfb" stroke="#2f7fd6" stroke-width="0.9"/><rect x="0.8" y="1.4" width="8.4" height="1.6" fill="#2f7fd6"/><path d="M7 5.4 L4.4 4 L4.4 6.8 Z" fill="#2f7fd6"/></svg>
<div class="a" style="left:360.5px;top:109px;width:1px;height:9px;background:#cfd6de"></div>
<svg style="left:363.1px;top:110.0px;" width="8.8" height="8.8" viewBox="0 0 10 10"><rect x="3.4" y="1" width="5.6" height="4.6" fill="#eaf2fc" stroke="#2f7fd6" stroke-width="0.8"/><rect x="0.8" y="3.6" width="5.6" height="4.6" fill="#eaf2fc" stroke="#2f7fd6" stroke-width="0.8"/></svg>
<svg style="left:374.1px;top:110.0px;" width="8.8" height="8.8" viewBox="0 0 10 10"><path d="M1 1.4 L8.6 1.4 L7.4 4 L6.6 8.6 L3 8.6 L2.2 4 Z" fill="#f0f0f0" stroke="#555" stroke-width="0.8"/><path d="M3.4 3 L6.2 7.4 M6.2 3 L3.4 7.4" stroke="#555" stroke-width="0.6"/></svg>
<svg style="left:385.1px;top:110.0px;" width="8.8" height="8.8" viewBox="0 0 10 10"><circle cx="4.2" cy="4" r="3" fill="#e4e8ee" stroke="#8a94a0" stroke-width="0.9"/><path d="M6.2 6.2 L8.8 8.8" stroke="#666" stroke-width="1.3"/><path d="M2.6 4 L5.8 4" stroke="#3a9a3a" stroke-width="0.9"/></svg>
<svg style="left:396.1px;top:110.0px;" width="8.8" height="8.8" viewBox="0 0 10 10"><circle cx="4" cy="3.8" r="2.9" fill="#e8f0fa" stroke="#8ab0d8" stroke-width="0.9"/><rect x="4.4" y="4.4" width="4.4" height="4" fill="#f4f8fc" stroke="#8ab0d8" stroke-width="0.8"/></svg>
<svg style="left:0px;top:0px;" width="963" height="541" viewBox="0 0 963 541"><path d="M546.2 244.2 L639.4 130 L640 205.8 L546.3 319.5 Z" fill="none" stroke="#8e8e8e" stroke-width="0.9"/><path d="M531.2 243 L545 241.6 L543.4 244.4 L555.6 250.4 L553.4 255.8 L541.2 250.2 L538.6 253.6 L534.6 254.2 Z" fill="#6fe07e" opacity="0.85"/><path d="M562 250.6 L573 245.4 L571.6 242.6 L585.6 242.2 L582 254.2 L578.4 251 L566.4 257 L561.2 254 Z" fill="#d98c84" opacity="0.9"/><path d="M539.6 246 L545.6 250 M545 245.4 L540.8 250.4" stroke="#1e5a2a" stroke-width="0.9"/><path d="M569.4 246.8 L575.6 251.2 M574.6 246 L570 252" stroke="#5a2a26" stroke-width="0.8"/><circle cx="558.4" cy="257.6" r="5.9" fill="#7c8af6" opacity="0.85"/><path d="M558.2 257.4 L558.2 241" stroke="#4a5ae8" stroke-width="1"/><circle cx="558.2" cy="241" r="1" fill="#3a48d8"/><circle cx="558.2" cy="257.4" r="1" fill="#2a38c8"/><path d="M636.1999999999999 127.2 L642.6 132.8 M642.6 127.2 L636.1999999999999 132.8" stroke="#ecc81c" stroke-width="1.2"/><circle cx="639.4" cy="130" r="1.3" fill="#f0c020"/><circle cx="643.6999999999999" cy="127.6" r="1.15" fill="#e8302a"/><circle cx="635.3" cy="133" r="1.15" fill="#e8302a"/><circle cx="635.0" cy="127.8" r="1.1" fill="#34b834"/><circle cx="643.8" cy="132.9" r="1.1" fill="#34b834"/><circle cx="639.1999999999999" cy="125.6" r="1.1" fill="#48d4ee"/><circle cx="639.6" cy="134.8" r="1" fill="#48d4ee"/><path d="M642.6 124.8 L643.0 126" stroke="#e8302a" stroke-width="0.6"/><path d="M636.8 203.0 L643.2 208.60000000000002 M643.2 203.0 L636.8 208.60000000000002" stroke="#ecc81c" stroke-width="1.2"/><circle cx="640" cy="205.8" r="1.3" fill="#f0c020"/><circle cx="644.3" cy="203.4" r="1.15" fill="#e8302a"/><circle cx="635.9" cy="208.8" r="1.15" fill="#e8302a"/><circle cx="635.6" cy="203.60000000000002" r="1.1" fill="#34b834"/><circle cx="644.4" cy="208.70000000000002" r="1.1" fill="#34b834"/><circle cx="639.8" cy="201.4" r="1.1" fill="#48d4ee"/><circle cx="640.2" cy="210.60000000000002" r="1" fill="#48d4ee"/><path d="M643.2 200.60000000000002 L643.6 201.8" stroke="#e8302a" stroke-width="0.6"/><path d="M543.0 241.39999999999998 L549.4000000000001 247.0 M549.4000000000001 241.39999999999998 L543.0 247.0" stroke="#ecc81c" stroke-width="1.2"/><circle cx="546.2" cy="244.2" r="1.3" fill="#f0c020"/><circle cx="550.5" cy="241.79999999999998" r="1.15" fill="#e8302a"/><circle cx="542.1" cy="247.2" r="1.15" fill="#e8302a"/><circle cx="541.8000000000001" cy="242.0" r="1.1" fill="#34b834"/><circle cx="550.6" cy="247.1" r="1.1" fill="#34b834"/><circle cx="546.0" cy="239.79999999999998" r="1.1" fill="#48d4ee"/><circle cx="546.4000000000001" cy="249.0" r="1" fill="#48d4ee"/><path d="M549.4000000000001 239.0 L549.8000000000001 240.2" stroke="#e8302a" stroke-width="0.6"/><path d="M543.0999999999999 316.7 L549.5 322.3 M549.5 316.7 L543.0999999999999 322.3" stroke="#ecc81c" stroke-width="1.2"/><circle cx="546.3" cy="319.5" r="1.3" fill="#f0c020"/><circle cx="550.5999999999999" cy="317.1" r="1.15" fill="#e8302a"/><circle cx="542.1999999999999" cy="322.5" r="1.15" fill="#e8302a"/><circle cx="541.9" cy="317.3" r="1.1" fill="#34b834"/><circle cx="550.6999999999999" cy="322.4" r="1.1" fill="#34b834"/><circle cx="546.0999999999999" cy="315.1" r="1.1" fill="#48d4ee"/><circle cx="546.5" cy="324.3" r="1" fill="#48d4ee"/><path d="M549.5 314.3 L549.9 315.5" stroke="#e8302a" stroke-width="0.6"/><rect x="489.09999999999997" y="249.10000000000002" width="5.2" height="5.2" rx="0.6" fill="#6494c4" stroke="#3e6c9c" stroke-width="0.6"/><rect x="489.09999999999997" y="268.5" width="5.2" height="5.2" rx="0.6" fill="#6494c4" stroke="#3e6c9c" stroke-width="0.6"/><rect x="480.9" y="253.9" width="5.2" height="5.2" rx="0.6" fill="#6494c4" stroke="#3e6c9c" stroke-width="0.6"/><rect x="497.29999999999995" y="253.9" width="5.2" height="5.2" rx="0.6" fill="#6494c4" stroke="#3e6c9c" stroke-width="0.6"/><rect x="480.9" y="263.59999999999997" width="5.2" height="5.2" rx="0.6" fill="#6494c4" stroke="#3e6c9c" stroke-width="0.6"/><rect x="497.29999999999995" y="263.59999999999997" width="5.2" height="5.2" rx="0.6" fill="#6494c4" stroke="#3e6c9c" stroke-width="0.6"/><path d="M485.5 257.7 L497.9 265.1 M497.9 257.7 L485.5 265.1 M491.7 253.9 L491.7 268.90000000000003" stroke="#f22ee0" stroke-width="2.2"/><path d="M487.09999999999997 259.1 L496.3 259.1 M487.09999999999997 264.1 L496.3 264.1" stroke="#f22ee0" stroke-width="1.6"/><rect x="489.09999999999997" y="259.09999999999997" width="5.2" height="5.2" rx="0.6" fill="#6494c4" stroke="#3e6c9c" stroke-width="0.6"/><path d="M486.7 260.5 L488.7 259.1 M496.7 260.5 L494.7 259.1" stroke="#fbb0f4" stroke-width="0.9"/></svg>
<div class="a" style="left:167.5px;top:335.6px;width:795.5px;height:9.6px;background:#0a84f2;"></div>
<div class="t" style="left:169.50px;top:337.27px;font-size:5.8px;transform:scaleX(0.868);color:#eaf4ff;">Graph</div>
<svg style="left:941.00px;top:339.04px" width="4.40" height="2.53" viewBox="0 0 4.40 2.53"><path d="M0 0 L4.40 0 L2.20 2.53 Z" fill="#fff"/></svg>
<svg style="left:948.5px;top:337px;" width="5" height="8" viewBox="0 0 5 8"><rect x="1.4" y="0.6" width="2" height="3.6" fill="#fff"/><path d="M0.4 4.4 L4.4 4.4 M2.4 4.4 L2.4 7" stroke="#fff" stroke-width="0.8"/></svg>
<svg style="left:956.2px;top:337.2px;" width="7" height="7" viewBox="0 0 7 7"><path d="M0.8 0.8 L5.2 5.2 M5.2 0.8 L0.8 5.2" stroke="#fff" stroke-width="1.3"/></svg>
<div class="a" style="left:167.5px;top:345.2px;width:795.5px;height:16px;background:#eef3fa;"></div>
<div class="a" style="left:167.5px;top:345.2px;width:1.5px;height:147px;background:#b8c0cc;"></div>
<div class="a" style="left:169px;top:361.4px;width:792.8px;height:130.6px;background:#9b9b9d;"></div>
<div class="a" style="left:961.8px;top:361.4px;width:1.2px;height:130.6px;background:#d8dce2;"></div>
<div class="a" style="left:167.5px;top:492px;width:795.5px;height:1px;background:#c4c6ca;"></div>
<div class="a" style="left:171.5px;top:350px;width:1px;height:1px;background:#b8c0cc;"></div>
<div class="a" style="left:171.5px;top:352px;width:1px;height:1px;background:#b8c0cc;"></div>
<div class="a" style="left:171.5px;top:354px;width:1px;height:1px;background:#b8c0cc;"></div>
<div class="a" style="left:171.5px;top:356px;width:1px;height:1px;background:#b8c0cc;"></div>
<div class="a" style="left:171.5px;top:358px;width:1px;height:1px;background:#b8c0cc;"></div>
<div class="a" style="left:174.3px;top:347.5px;width:10.6px;height:11.8px;background:#c2daf6;"></div>
<svg style="left:176.5px;top:348.5px;" width="8" height="10" viewBox="0 0 8 10"><path d="M0.6 0.4 L0.6 8 L2.6 6.2 L4 9.4 L5.4 8.8 L4 5.8 L6.6 5.6 Z" fill="#111"/></svg>
<svg style="left:189px;top:349px;" width="10" height="10" viewBox="0 0 10 10"><circle cx="3.8" cy="3.8" r="3" fill="#dfe6ee" stroke="#6a7078" stroke-width="0.9"/><path d="M6 6 L8.8 8.8" stroke="#e08a28" stroke-width="1.7"/><path d="M2.4 3.8 L5.2 3.8 M3.8 2.4 L3.8 5.2" stroke="#555" stroke-width="0.8"/></svg>
<svg style="left:200px;top:349px;" width="10" height="10" viewBox="0 0 10 10"><circle cx="3.8" cy="3.8" r="3" fill="#dfe6ee" stroke="#6a7078" stroke-width="0.9"/><path d="M6 6 L8.8 8.8" stroke="#e08a28" stroke-width="1.7"/><path d="M2.4 3.8 L5.2 3.8" stroke="#555" stroke-width="0.8"/></svg>
<svg style="left:211px;top:349px;" width="10" height="10" viewBox="0 0 10 10"><circle cx="4.2" cy="3.4" r="2.6" fill="#dfe6ee" stroke="#555" stroke-width="0.9"/><path d="M5.8 5.6 L8 8" stroke="#e08a28" stroke-width="1.4"/><path d="M0.8 1 L0.8 8.8 L6.4 8.8 M8.8 1 L8.8 6" fill="none" stroke="#6a7684" stroke-width="0.8"/></svg>
<svg style="left:222px;top:349px;" width="11" height="10" viewBox="0 0 11 10"><rect x="0.8" y="1.4" width="8.6" height="6.8" fill="#f4f8fd" stroke="#5a8ccc" stroke-width="0.8"/><rect x="0.8" y="1.4" width="8.6" height="1.8" fill="#2f7fd6"/><circle cx="8.2" cy="7.4" r="1.7" fill="#fff" stroke="#e04a3a" stroke-width="0.9"/></svg>
<div class="a" style="left:234px;top:348.5px;width:1px;height:11px;background:#c4ccd8"></div>
<svg style="left:236px;top:349px;" width="10" height="10" viewBox="0 0 10 10"><rect x="0.8" y="0.8" width="8.4" height="8" rx="0.6" fill="#fff" stroke="#3f8ade" stroke-width="1.2"/><path d="M0.8 4.8 L2.6 3.6 L2.6 6 Z M9.2 4.8 L7.4 3.6 L7.4 6 Z" fill="#2f7fd6"/></svg>
<svg style="left:247px;top:349px;" width="10" height="10" viewBox="0 0 10 10"><rect x="0.8" y="0.8" width="8.4" height="8" rx="0.6" fill="#fff" stroke="#3f8ade" stroke-width="1.2"/><rect x="3.4" y="3.2" width="3.2" height="3.2" fill="#6aa6e8"/></svg>
<svg style="left:258px;top:349px;" width="9" height="10" viewBox="0 0 9 10"><path d="M2 9 L2 5.4 L1 3.6 L2.2 3 L3.2 4.6 L3.2 1.4 L4.4 1.4 L4.4 4 L5 1 L6 1.2 L5.8 4.2 L6.8 2 L7.6 2.4 L6.8 5 L6.8 9 Z" fill="#fbfbfb" stroke="#8a8a8a" stroke-width="0.6"/></svg>
<div class="a" style="left:268.5px;top:348.5px;width:1px;height:11px;background:#c4ccd8"></div>
<svg style="left:271px;top:349px;" width="10" height="10" viewBox="0 0 10 10"><rect x="0.6" y="1.6" width="8.8" height="6.4" fill="#dcebfb" stroke="#2f7fd6" stroke-width="0.9"/><rect x="0.6" y="1.6" width="8.8" height="2.2" fill="#2f7fd6"/></svg>
<svg style="left:282.5px;top:349px;" width="9" height="10" viewBox="0 0 9 10"><path d="M0.8 2 L8 2 M2.4 4.4 L6.4 4.4 M4.4 4.4 L4.4 8" stroke="#d7e3f3" stroke-width="1.2"/></svg>
<div class="a" style="left:293px;top:348.5px;width:1px;height:11px;background:#d4dce8"></div>
<svg style="left:297px;top:349px;" width="8" height="10" viewBox="0 0 8 10"><path d="M1 1 L6 1 M3.4 2 L3.4 8 M2 4 L5 4 M2 6.4 L5 6.4" stroke="#d7e3f3" stroke-width="1.1"/></svg>
<svg style="left:308px;top:349px;" width="8" height="10" viewBox="0 0 8 10"><path d="M3.4 1 L3.4 8.6 M1.6 3 L5.2 3 M1.6 6.4 L5.2 6.4" stroke="#d7e3f3" stroke-width="1.1"/></svg>
<svg style="left:319px;top:349px;" width="8" height="10" viewBox="0 0 8 10"><path d="M1 8.4 L6 8.4 M3.4 1 L3.4 7.4 M2 3.4 L5 3.4 M2 5.6 L5 5.6" stroke="#d7e3f3" stroke-width="1.1"/></svg>
<svg style="left:331px;top:349px;" width="8" height="10" viewBox="0 0 8 10"><path d="M1 1 L6 1 M3.4 2 L3.4 8 M2 4 L5 4 M2 6.4 L5 6.4" stroke="#d7e3f3" stroke-width="1.1"/></svg>
<svg style="left:342.5px;top:349px;" width="8" height="10" viewBox="0 0 8 10"><path d="M3.4 1 L3.4 8.6 M1.6 3 L5.2 3 M1.6 6.4 L5.2 6.4" stroke="#d7e3f3" stroke-width="1.1"/></svg>
<svg style="left:353.5px;top:349px;" width="8" height="10" viewBox="0 0 8 10"><path d="M1 8.4 L6 8.4 M3.4 1 L3.4 7.4 M2 3.4 L5 3.4 M2 5.6 L5 5.6" stroke="#d7e3f3" stroke-width="1.1"/></svg>
<svg style="left:367px;top:349px;" width="8" height="10" viewBox="0 0 8 10"><path d="M1 1 L6 1 M3.4 2 L3.4 8 M2 4 L5 4 M2 6.4 L5 6.4" stroke="#d7e3f3" stroke-width="1.1"/></svg>
<svg style="left:378px;top:349px;" width="8" height="10" viewBox="0 0 8 10"><path d="M3.4 1 L3.4 8.6 M1.6 3 L5.2 3 M1.6 6.4 L5.2 6.4" stroke="#d7e3f3" stroke-width="1.1"/></svg>
<svg style="left:389px;top:349px;" width="8" height="10" viewBox="0 0 8 10"><path d="M1 8.4 L6 8.4 M3.4 1 L3.4 7.4 M2 3.4 L5 3.4 M2 5.6 L5 5.6" stroke="#d7e3f3" stroke-width="1.1"/></svg>
<svg style="left:402px;top:349px;" width="8" height="10" viewBox="0 0 8 10"><path d="M1 1 L6 1 M3.4 2 L3.4 8 M2 4 L5 4 M2 6.4 L5 6.4" stroke="#d7e3f3" stroke-width="1.1"/></svg>
<svg style="left:413px;top:349px;" width="8" height="10" viewBox="0 0 8 10"><path d="M3.4 1 L3.4 8.6 M1.6 3 L5.2 3 M1.6 6.4 L5.2 6.4" stroke="#d7e3f3" stroke-width="1.1"/></svg>
<svg style="left:424px;top:349px;" width="8" height="10" viewBox="0 0 8 10"><path d="M1 8.4 L6 8.4 M3.4 1 L3.4 7.4 M2 3.4 L5 3.4 M2 5.6 L5 5.6" stroke="#d7e3f3" stroke-width="1.1"/></svg>
<svg style="left:435px;top:349px;" width="8" height="10" viewBox="0 0 8 10"><path d="M0.8 3 L3 3 L3 6.6 L0.8 6.6 Z M4.6 3 L6.8 3 L6.8 6.6 L4.6 6.6 Z" fill="#d7e3f3"/></svg>
<svg style="left:449px;top:349px;" width="8" height="10" viewBox="0 0 8 10"><path d="M3.4 1 L3.4 8.6 M1.6 3 L5.2 3 M1.6 6.4 L5.2 6.4" stroke="#d7e3f3" stroke-width="1.1"/></svg>
<svg style="left:460px;top:349px;" width="8" height="10" viewBox="0 0 8 10"><path d="M1 8.4 L6 8.4 M3.4 1 L3.4 7.4 M2 3.4 L5 3.4 M2 5.6 L5 5.6" stroke="#d7e3f3" stroke-width="1.1"/></svg>
<svg style="left:471px;top:349px;" width="8" height="10" viewBox="0 0 8 10"><path d="M0.8 3 L3 3 L3 6.6 L0.8 6.6 Z M4.6 3 L6.8 3 L6.8 6.6 L4.6 6.6 Z" fill="#d7e3f3"/></svg>
<svg style="left:483px;top:349px;" width="8" height="10" viewBox="0 0 8 10"><path d="M1 1 L6 1 M3.4 2 L3.4 8 M2 4 L5 4 M2 6.4 L5 6.4" stroke="#d7e3f3" stroke-width="1.1"/></svg>
<div class="a" style="left:329px;top:348.5px;width:1px;height:11px;background:#d4dce8"></div>
<div class="a" style="left:364.5px;top:348.5px;width:1px;height:11px;background:#d4dce8"></div>
<div class="a" style="left:399.5px;top:348.5px;width:1px;height:11px;background:#d4dce8"></div>
<div class="a" style="left:446px;top:348.5px;width:1px;height:11px;background:#d4dce8"></div>
<div class="a" style="left:958.4px;top:355.6px;width:1.4px;height:0.8px;background:#777;"></div>
<svg style="left:958.00px;top:357.17px" width="2.20" height="1.26" viewBox="0 0 2.20 1.26"><path d="M0 0 L2.20 0 L1.10 1.26 Z" fill="#666"/></svg>
<svg style="left:0px;top:0px;" width="963" height="541" viewBox="0 0 963 541"><path d="M375 365.5 C390 365.5 397 366 402 375 C409 389 412 402.4 436 402.6" fill="none" stroke="#1e1e1e" stroke-width="0.8"/><path d="M375 365.5 C385.0 366 393.0 390 398.0 425 C400.0 450 402.0 475 403.0 492" fill="none" stroke="#2a2a2a" stroke-width="0.7"/><path d="M375 365.5 C387.1 366 395.4 390 400.2 425 C402.4 450 404.7 475 405.7 492" fill="none" stroke="#2a2a2a" stroke-width="0.7"/><path d="M375 365.5 C388.9 366 397.4 390 402.1 425 C404.4 450 406.9 475 407.9 492" fill="none" stroke="#2a2a2a" stroke-width="0.7"/><path d="M375 365.5 C390.5 366 399.2 390 403.9 425 C406.2 450 409.0 475 410.0 492" fill="none" stroke="#2a2a2a" stroke-width="0.7"/><path d="M375 365.5 C392.0 366 401.0 390 405.5 425 C408.0 450 411.0 475 412.0 492" fill="none" stroke="#2a2a2a" stroke-width="0.7"/></svg>
<div class="a" style="left:289.2px;top:361px;width:86.2px;height:53px;background:#f4f4f4;border-radius:0 0 5px 5px;"></div>
<div class="t" style="left:321.25px;top:361.55px;font-size:7.4px;transform:scaleX(0.855);color:#1e1e1e;">baseCS</div>
<div class="t" style="left:311.25px;top:369.69px;font-size:5.4px;transform:scaleX(0.957);font-style:italic;color:#3a3a3a;">CoordinateSystem</div>
<div class="a" style="left:291.8px;top:376.4px;width:81px;height:10.6px;background:#f9f9f9;border:1px solid #dadada;border-radius:1px;"></div>
<div class="t" style="left:295.00px;top:379.18px;font-size:5.6px;transform:scaleX(0.970);color:#333;">AtDGNModelOrigin</div>
<svg style="left:366.30px;top:381.65px" width="2.60" height="1.49" viewBox="0 0 2.60 1.49"><path d="M0 0 L2.60 0 L1.30 1.49 Z" fill="#666"/></svg>
<svg style="left:0px;top:0px;" width="963" height="541" viewBox="0 0 963 541"><circle cx="295.5" cy="393.8" r="3.9" fill="#f4f4f4" stroke="#9a9a9a" stroke-width="0.6"/><path d="M294.0 393.2 L295.5 394.8 L297.0 393.2" fill="none" stroke="#666" stroke-width="0.9"/><circle cx="369.4" cy="393.8" r="3.9" fill="#f4f4f4" stroke="#9a9a9a" stroke-width="0.6"/><path d="M367.9 393.2 L369.4 394.8 L370.9 393.2" fill="none" stroke="#666" stroke-width="0.9"/><path d="M288 401 L291.4 403.1 L288 405.2 Z" fill="#111"/><circle cx="375.2" cy="365.6" r="1.5" fill="#111"/></svg>
<div class="t" style="left:293.50px;top:400.00px;font-size:5.4px;transform:scaleX(0.968);color:#3a3a3a;">DGNModelN...</div>
<div class="a" style="left:432px;top:361px;width:94.4px;height:79.2px;background:#e23fe4;border-radius:0 0 6px 6px;"></div>
<div class="a" style="left:436px;top:361px;width:86.6px;height:75.8px;background:#fcaef7;border-radius:0 0 3.5px 3.5px;"></div>
<div class="t" style="left:470.00px;top:361.55px;font-size:7.4px;transform:scaleX(0.992);color:#2a1a2a;">point1</div>
<div class="t" style="left:474.00px;top:369.69px;font-size:5.4px;transform:scaleX(0.975);font-style:italic;color:#4a2a4a;">Point</div>
<div class="a" style="left:438.8px;top:376.4px;width:81.4px;height:10.6px;background:#fdc6f9;border:1px solid #e9a4e7;border-radius:1px;"></div>
<div class="t" style="left:441.80px;top:379.18px;font-size:5.6px;transform:scaleX(0.939);color:#4a3a4a;">ByCartesianCoordinates</div>
<svg style="left:513.70px;top:381.65px" width="2.60" height="1.49" viewBox="0 0 2.60 1.49"><path d="M0 0 L2.60 0 L1.30 1.49 Z" fill="#7a5a7a"/></svg>
<svg style="left:0px;top:0px;" width="963" height="541" viewBox="0 0 963 541"><circle cx="443" cy="394" r="3.9" fill="#fbbcf6" stroke="#c878c6" stroke-width="0.6"/><path d="M441.5 393.4 L443 395 L444.5 393.4" fill="none" stroke="#666" stroke-width="0.9"/><circle cx="516" cy="394" r="3.9" fill="#fbbcf6" stroke="#c878c6" stroke-width="0.6"/><path d="M514.5 394.6 L516 393 L517.5 394.6" fill="none" stroke="#666" stroke-width="0.9"/><path d="M435.6 401 L439.2 403 L435.6 405 Z" fill="#111"/><path d="M435.6 408.1 L439.2 410.1 L435.6 412.1 Z" fill="#111"/><path d="M435.6 415.2 L439.2 417.2 L435.6 419.2 Z" fill="#111"/><path d="M435.6 422.3 L439.2 424.3 L435.6 426.3 Z" fill="#111"/><circle cx="522.6" cy="365.6" r="1.5" fill="#111"/></svg>
<div class="t" style="left:440.50px;top:400.00px;font-size:5.4px;transform:scaleX(0.964);color:#5a3a5a;">CoordinateSy...</div>
<div class="t" style="left:440.50px;top:407.10px;font-size:5.4px;color:#5a3a5a;">XTranslation</div>
<div class="t" style="left:440.50px;top:414.19px;font-size:5.4px;color:#5a3a5a;">YTranslation</div>
<div class="t" style="left:440.50px;top:421.30px;font-size:5.4px;transform:scaleX(0.990);color:#5a3a5a;">ZTranslation</div>
<div class="a" style="left:437px;top:477.3px;width:90px;height:15px;background:#f6f6f6;border-radius:4px 4px 0 0;"></div>
<div class="t" style="left:470.25px;top:480.55px;font-size:7.4px;transform:scaleX(1.017);color:#2a2a2a;">point3</div>
<div class="t" style="left:474.50px;top:488.89px;font-size:5.4px;transform:scaleX(0.975);font-style:italic;color:#3a3a3a;clip-path:inset(0 0 2.6px 0);">Point</div>
<div class="a" style="left:640px;top:477.3px;width:66px;height:15px;background:#f6f6f6;border-radius:4px 4px 0 0;"></div>
<div class="t" style="left:677.00px;top:480.55px;font-size:7.4px;transform:scaleX(0.841);color:#2a2a2a;">ace1</div>
<div class="t" style="left:677.00px;top:489.18px;font-size:4.9px;transform:scaleX(0.870);font-style:italic;color:#3a3a3a;clip-path:inset(0 0 2.6px 0);">ce</div>
<svg style="left:0px;top:0px;" width="963" height="541" viewBox="0 0 963 541"><circle cx="708.6" cy="484.6" r="1.4" fill="#111"/></svg>
<div class="a" style="left:522px;top:384.8px;width:153.5px;height:107.4px;background:#ffffff;border:1px solid #666666;box-shadow:0 0 1.5px rgba(0,0,0,0.5);"></div>
<div class="a" style="left:523px;top:385.8px;width:6.5px;height:84.5px;background:#f4f4f4;"></div>
<div class="a" style="left:529.5px;top:396.2px;width:138px;height:1px;background:#f3f3f3"></div>
<div class="t" style="left:531.50px;top:387.84px;font-size:5.5px;transform:scaleX(1.068);color:#333;">SurfaceNormalLin</div>
<svg style="left:583px;top:388.6px;" width="8" height="5" viewBox="0 0 8 5"><path d="M0.6 2.4 L2.4 0.9 L2.4 3.9 Z M2.8 2.4 L4.6 0.9 L4.6 3.9 Z" fill="#555"/><path d="M4.4 2.4 L7 2.4" stroke="#555" stroke-width="0.8"/></svg>
<div class="t" style="left:595.00px;top:387.84px;font-size:5.5px;transform:scaleX(1.040);color:#333;max-width:71px;overflow:hidden;">&lt;Line&gt;</div>
<div class="a" style="left:529.5px;top:406.76px;width:138px;height:1px;background:#f3f3f3"></div>
<div class="t" style="left:531.50px;top:398.40px;font-size:5.5px;color:#333;">T</div>
<svg style="left:583px;top:399.16px;" width="8" height="5" viewBox="0 0 8 5"><path d="M0.6 2.4 L2.4 0.9 L2.4 3.9 Z M2.8 2.4 L4.6 0.9 L4.6 3.9 Z" fill="#555"/><path d="M4.4 2.4 L7 2.4" stroke="#555" stroke-width="0.8"/></svg>
<div class="t" style="left:595.00px;top:398.40px;font-size:5.5px;transform:scaleX(0.981);color:#333;max-width:71px;overflow:hidden;">0.0</div>
<div class="a" style="left:529.5px;top:417.32px;width:138px;height:1px;background:#f3f3f3"></div>
<div class="a" style="left:529.5px;top:407.32px;width:62px;height:9.6px;background:#d7e6f8;"></div>
<div class="t" style="left:531.50px;top:408.96px;font-size:5.5px;color:#333;">U</div>
<svg style="left:583px;top:409.72px;" width="8" height="5" viewBox="0 0 8 5"><path d="M0.6 2.4 L2.4 0.9 L2.4 3.9 Z M2.8 2.4 L4.6 0.9 L4.6 3.9 Z" fill="#555"/><path d="M4.4 2.4 L7 2.4" stroke="#555" stroke-width="0.8"/></svg>
<div class="t" style="left:595.00px;top:408.96px;font-size:5.5px;transform:scaleX(0.981);color:#333;max-width:71px;overflow:hidden;">0.0</div>
<div class="a" style="left:529.5px;top:427.88px;width:138px;height:1px;background:#f3f3f3"></div>
<div class="t" style="left:531.50px;top:419.52px;font-size:5.5px;color:#333;">V</div>
<svg style="left:583px;top:420.28000000000003px;" width="8" height="5" viewBox="0 0 8 5"><path d="M0.6 2.4 L2.4 0.9 L2.4 3.9 Z M2.8 2.4 L4.6 0.9 L4.6 3.9 Z" fill="#555"/><path d="M4.4 2.4 L7 2.4" stroke="#555" stroke-width="0.8"/></svg>
<div class="t" style="left:595.00px;top:419.52px;font-size:5.5px;transform:scaleX(0.981);color:#333;max-width:71px;overflow:hidden;">0.0</div>
<div class="a" style="left:529.5px;top:438.44px;width:138px;height:1px;background:#f3f3f3"></div>
<div class="t" style="left:531.50px;top:430.08px;font-size:5.5px;color:#333;">X</div>
<svg style="left:583px;top:430.84000000000003px;" width="8" height="5" viewBox="0 0 8 5"><path d="M0.6 2.4 L2.4 0.9 L2.4 3.9 Z M2.8 2.4 L4.6 0.9 L4.6 3.9 Z" fill="#555"/><path d="M4.4 2.4 L7 2.4" stroke="#555" stroke-width="0.8"/></svg>
<div class="t" style="left:595.00px;top:430.08px;font-size:5.5px;transform:scaleX(1.015);color:#333;max-width:71px;overflow:hidden;">-5348.96354574259</div>
<div class="a" style="left:529.5px;top:449.0px;width:138px;height:1px;background:#f3f3f3"></div>
<div class="t" style="left:531.50px;top:440.64px;font-size:5.5px;transform:scaleX(0.982);color:#333;">XYZ</div>
<svg style="left:583px;top:441.40000000000003px;" width="8" height="5" viewBox="0 0 8 5"><path d="M0.6 2.4 L2.4 0.9 L2.4 3.9 Z M2.8 2.4 L4.6 0.9 L4.6 3.9 Z" fill="#555"/><path d="M4.4 2.4 L7 2.4" stroke="#555" stroke-width="0.8"/></svg>
<div class="t" style="left:595.00px;top:440.64px;font-size:5.5px;transform:scaleX(1.032);color:#333;max-width:71px;overflow:hidden;">{-5348.96354574259, 4402</div>
<div class="a" style="left:529.5px;top:459.56px;width:138px;height:1px;background:#f3f3f3"></div>
<div class="t" style="left:531.50px;top:451.20px;font-size:5.5px;color:#333;">Y</div>
<svg style="left:583px;top:451.96000000000004px;" width="8" height="5" viewBox="0 0 8 5"><path d="M0.6 2.4 L2.4 0.9 L2.4 3.9 Z M2.8 2.4 L4.6 0.9 L4.6 3.9 Z" fill="#555"/><path d="M4.4 2.4 L7 2.4" stroke="#555" stroke-width="0.8"/></svg>
<div class="t" style="left:595.00px;top:451.20px;font-size:5.5px;transform:scaleX(1.059);color:#333;max-width:71px;overflow:hidden;">4402.703125</div>
<div class="a" style="left:529.5px;top:470.12px;width:138px;height:1px;background:#f3f3f3"></div>
<div class="t" style="left:531.50px;top:461.76px;font-size:5.5px;color:#333;">Z</div>
<svg style="left:583px;top:462.52000000000004px;" width="8" height="5" viewBox="0 0 8 5"><path d="M0.6 2.4 L2.4 0.9 L2.4 3.9 Z M2.8 2.4 L4.6 0.9 L4.6 3.9 Z" fill="#555"/><path d="M4.4 2.4 L7 2.4" stroke="#555" stroke-width="0.8"/></svg>
<div class="t" style="left:595.00px;top:461.76px;font-size:5.5px;transform:scaleX(0.981);color:#333;max-width:71px;overflow:hidden;">0.0</div>
<div class="a" style="left:591.5px;top:386px;width:1px;height:84px;background:#f3f3f3"></div>
<div class="a" style="left:523px;top:470px;width:144.5px;height:21.5px;background:#f1f1f1;"></div>
<div class="t" style="left:531.50px;top:472.64px;font-size:5.5px;transform:scaleX(1.008);font-weight:bold;color:#222;">Technique Inputs Passed Through as Outputs</div>
<div class="t" style="left:531.50px;top:483.34px;font-size:5.5px;transform:scaleX(1.033);font-weight:bold;color:#222;">General Outputs</div>
<svg style="left:524px;top:473px;" width="5" height="16" viewBox="0 0 5 16"><path d="M1 0.6 L3 2.6 L1 4.6 M1 11.2 L3 13.2 L1 15.2" fill="none" stroke="#b4b4b4" stroke-width="0.7"/></svg>
<div class="a" style="left:667.5px;top:387.3px;width:5.6px;height:5.8px;background:#fafafa;border:1px solid #8a8a8a;"></div>
<svg style="left:668.6px;top:388.5px;" width="4" height="4" viewBox="0 0 4 4"><path d="M0.5 0.5 L2.9 2.9 M2.9 0.5 L0.5 2.9" stroke="#444" stroke-width="0.7"/></svg>
<div class="a" style="left:667.5px;top:395px;width:6.5px;height:96px;background:#f3f3f3;"></div>
<div class="a" style="left:668.5px;top:442px;width:4.4px;height:38px;background:#c4c4c4;"></div>
<svg style="left:668px;top:484px;" width="6" height="5" viewBox="0 0 6 5"><path d="M1 1.2 L2.8 3.4 L4.6 1.2 Z" fill="#444"/></svg>
<svg style="left:538.5px;top:409px;" width="8" height="11" viewBox="0 0 8 11"><path d="M0.8 0.6 L0.8 8 L2.6 6.4 L4 9.6 L5.2 9 L3.8 6 L6.2 5.8 Z" fill="#fff" stroke="#222" stroke-width="0.7"/></svg>
<div class="a" style="left:0px;top:493px;width:963px;height:48px;background:#f0f0f0;"></div>
<div class="a" style="left:0px;top:493px;width:167.5px;height:2px;background:#8e9aaa;"></div>
<div class="a" style="left:0px;top:493px;width:2px;height:2px;background:#f6f6f6;"></div>
<div class="a" style="left:167.5px;top:493px;width:795.5px;height:3.5px;background:#e6e6e6;"></div>
<div class="a" style="left:3px;top:500px;width:1px;height:1px;background:#c4c4c4;"></div>
<div class="a" style="left:3px;top:502px;width:1px;height:1px;background:#c4c4c4;"></div>
<div class="a" style="left:3px;top:504px;width:1px;height:1px;background:#c4c4c4;"></div>
<div class="a" style="left:3px;top:506px;width:1px;height:1px;background:#c4c4c4;"></div>
<div class="t" style="left:7.00px;top:499.29px;font-size:8.2px;font-weight:bold;color:#111;">X</div>
<div class="a" style="left:16px;top:499px;width:52.5px;height:9.6px;background:#ffffff;border:1px solid #dcdcdc;border-radius:1px;"></div>
<div class="t" style="left:18.50px;top:500.84px;font-size:5.5px;transform:scaleX(1.005);color:#a8a8a8;">2711.6</div>
<div class="t" style="left:75.00px;top:499.29px;font-size:8.2px;font-weight:bold;color:#111;">Y</div>
<div class="a" style="left:84px;top:499px;width:52.5px;height:9.6px;background:#ffffff;border:1px solid #dcdcdc;border-radius:1px;"></div>
<div class="t" style="left:86.50px;top:500.84px;font-size:5.5px;transform:scaleX(0.994);color:#a8a8a8;">-430.2</div>
<div class="t" style="left:143.00px;top:499.29px;font-size:8.2px;font-weight:bold;color:#111;">Z</div>
<div class="a" style="left:152px;top:499px;width:52.5px;height:9.6px;background:#ffffff;border:1px solid #dcdcdc;border-radius:1px;"></div>
<div class="t" style="left:154.50px;top:500.84px;font-size:5.5px;transform:scaleX(1.019);color:#a8a8a8;">-7229.0</div>
<div class="a" style="left:71px;top:497.5px;width:1px;height:12px;background:#dcdcdc"></div>
<div class="a" style="left:139px;top:497.5px;width:1px;height:12px;background:#dcdcdc"></div>
<div class="t" style="left:4.00px;top:516.06px;font-size:5.8px;transform:scaleX(0.996);color:#4a4a4a;">Element Selection &gt; Settings Saved</div>
<div class="a" style="left:150px;top:513px;width:1.4px;height:11.5px;background:#cfcfcf;"></div>
<div class="a" style="left:165px;top:513px;width:1.4px;height:11.5px;background:#c4c4c4;"></div>
<div class="a" style="left:671.45px;top:514px;width:1.1px;height:10px;background:#bcbcbc;"></div>
<div class="a" style="left:686.1500000000001px;top:514px;width:1.1px;height:10px;background:#bcbcbc;"></div>
<div class="a" style="left:701.35px;top:514px;width:1.1px;height:10px;background:#bcbcbc;"></div>
<div class="a" style="left:768.0500000000001px;top:514px;width:1.1px;height:10px;background:#bcbcbc;"></div>
<div class="a" style="left:826.85px;top:514px;width:1.1px;height:10px;background:#bcbcbc;"></div>
<div class="a" style="left:841.95px;top:514px;width:1.1px;height:10px;background:#bcbcbc;"></div>
<div class="a" style="left:857.0500000000001px;top:514px;width:1.1px;height:10px;background:#bcbcbc;"></div>
<div class="a" style="left:872.45px;top:514px;width:1.1px;height:10px;background:#bcbcbc;"></div>
<div class="a" style="left:886.6500000000001px;top:514px;width:1.1px;height:10px;background:#bcbcbc;"></div>
<div class="a" style="left:901.75px;top:514px;width:1.1px;height:10px;background:#bcbcbc;"></div>
<div class="a" style="left:917.45px;top:514px;width:1.1px;height:10px;background:#bcbcbc;"></div>
<div class="a" style="left:932.45px;top:514px;width:1.1px;height:10px;background:#bcbcbc;"></div>
<div class="a" style="left:947.45px;top:514px;width:1.1px;height:10px;background:#bcbcbc;"></div>
<svg style="left:676.5px;top:514.5px;" width="9" height="9" viewBox="0 0 9 9"><path d="M1 7.6 Q3.6 7.8 4.2 4.6 Q4.8 1.6 7.8 1.4" fill="none" stroke="#4a8cd0" stroke-width="1"/><circle cx="1.2" cy="7.6" r="0.8" fill="#4a8cd0"/><circle cx="7.6" cy="1.4" r="0.8" fill="#4a8cd0"/></svg>
<svg style="left:690.5px;top:514.5px;" width="9" height="9" viewBox="0 0 9 9"><rect x="1" y="4" width="6.4" height="4.4" rx="0.6" fill="#d8b43a"/><path d="M2.4 4 L2.4 2.8 Q4.2 0.6 6 2.8 L6 4" fill="none" stroke="#6a6a6a" stroke-width="1"/><rect x="3" y="5.2" width="2.4" height="1.8" fill="#8a6a1a"/></svg>
<div class="t" style="left:704.50px;top:516.24px;font-size:5.5px;transform:scaleX(1.065);color:#4a4a4a;">Default ((none))</div>
<svg style="left:774px;top:515px;" width="7" height="9" viewBox="0 0 7 9"><path d="M0.6 0.4 L0.6 7 L2.2 5.6 L3.4 8.2 L4.6 7.6 L3.4 5.2 L5.6 5 Z" fill="#111"/></svg>
<div class="t" style="left:785.50px;top:516.44px;font-size:5.5px;transform:scaleX(1.063);color:#555;">: 1</div>
<svg style="left:877px;top:514.5px;" width="9" height="9" viewBox="0 0 9 9"><rect x="0.8" y="1.4" width="7" height="6.6" fill="#f0f0f0" stroke="#c0c0c0" stroke-width="0.8"/><path d="M2.4 3 L6.2 3 L6.2 6" fill="none" stroke="#c8c8c8" stroke-width="0.8"/></svg>
<svg style="left:922px;top:514.5px;" width="8" height="9" viewBox="0 0 8 9"><rect x="1" y="0.8" width="5.6" height="7.6" fill="#2f7fd6"/><rect x="1" y="0.8" width="2" height="7.6" fill="#1b5fc0"/></svg>
<svg style="left:952.5px;top:515px;" width="7" height="8" viewBox="0 0 7 8"><rect x="0.6" y="0.8" width="5.4" height="5.6" fill="#e4e4e4" stroke="#9a9a9a" stroke-width="0.7"/><path d="M1.8 2.4 L4.8 2.4 M1.8 4 L4.8 4" stroke="#8a8a8a" stroke-width="0.7"/></svg>
<div class="a" style="left:3px;top:529px;width:1px;height:1px;background:#c4c4c4;"></div>
<div class="a" style="left:3px;top:531px;width:1px;height:1px;background:#c4c4c4;"></div>
<div class="a" style="left:3px;top:533px;width:1px;height:1px;background:#c4c4c4;"></div>
<div class="a" style="left:3px;top:535px;width:1px;height:1px;background:#c4c4c4;"></div>
<div class="a" style="left:3px;top:537px;width:1px;height:1px;background:#c4c4c4;"></div>
<div class="a" style="left:3px;top:539px;width:1px;height:1px;background:#c4c4c4;"></div>
<svg style="left:8px;top:530.6px;" width="11" height="10" viewBox="0 0 11 10"><path d="M0.6 4.4 L5 0.6 L5 3 Q10 3 10.4 8.4 Q8.4 5.6 5 5.8 L5 8.2 Z" fill="#2f86e0"/></svg>
<svg style="left:20.5px;top:530.6px;" width="11" height="10" viewBox="0 0 11 10"><path d="M10.4 4.4 L6 0.6 L6 3 Q1 3 0.6 8.4 Q2.6 5.6 6 5.8 L6 8.2 Z" fill="#2f86e0"/></svg>
<div class="a" style="left:37px;top:528px;width:1px;height:13px;background:#d0d0d0"></div>
<div class="a" style="left:40.5px;top:529.6px;width:149px;height:12px;background:#e2e2e2;border:1px solid #d2d2d2;"></div>
<div class="t" style="left:43.00px;top:532.06px;font-size:5.8px;transform:scaleX(0.926);color:#333;">baseCS.XYPlane</div>
<svg style="left:183.20px;top:534.17px" width="3.60" height="2.07" viewBox="0 0 3.60 2.07"><path d="M0 0 L3.60 0 L1.80 2.07 Z" fill="#222"/></svg>
<svg style="left:191px;top:528.5px;" width="14" height="12" viewBox="0 0 14 12"><path d="M2.6 2.4 L10.4 1 L12.6 8.6 L1 10.6 Z M2 5.2 L11.2 3.8 M1.6 8 L12 6.2 M5.2 1.8 L4.8 9.8 M7.8 1.4 L8.6 9.2" fill="none" stroke="#aaa" stroke-width="0.8"/></svg>
<div class="a" style="left:207.5px;top:528px;width:1px;height:13px;background:#ead6d6"></div>
<svg style="left:212px;top:528px;" width="14" height="14" viewBox="0 0 14 14"><circle cx="6.6" cy="6.8" r="6.3" fill="#58ac3c"/><circle cx="6.6" cy="6.8" r="4.6" fill="#6cc04c"/><path d="M2.4 6.8 L6.2 3.8 L6.2 5.6 L10.6 5.6 L10.6 8 L6.2 8 L6.2 9.8 Z" fill="#fff"/></svg>
<svg style="left:227.50px;top:534.14px" width="3.00" height="1.72" viewBox="0 0 3.00 1.72"><path d="M0 0 L3.00 0 L1.50 1.72 Z" fill="#222"/></svg>
<svg style="left:233px;top:528px;" width="14" height="14" viewBox="0 0 14 14"><circle cx="6.6" cy="6.8" r="6.3" fill="#bcbcbc"/><circle cx="6.6" cy="6.8" r="4.6" fill="#cacaca"/><path d="M10.8 6.8 L7 3.8 L7 5.6 L2.6 5.6 L2.6 8 L7 8 L7 9.8 Z" fill="#efefef"/></svg>
<svg style="left:249.20px;top:534.25px" width="2.60" height="1.49" viewBox="0 0 2.60 1.49"><path d="M0 0 L2.60 0 L1.30 1.49 Z" fill="#222"/></svg>
<svg style="left:255px;top:529px;" width="14" height="12" viewBox="0 0 14 12"><ellipse cx="6.8" cy="8" rx="6.2" ry="3.2" fill="#9a9ea4"/><path d="M2 7 L3 1.4 L5 1.8 L6 5 L11 5.4 L12.6 8 Z" fill="#a8acb2"/><path d="M2.4 1.4 L4.4 1.4" stroke="#777" stroke-width="0.8"/></svg>
<svg style="left:270.80px;top:534.14px" width="3.00" height="1.72" viewBox="0 0 3.00 1.72"><path d="M0 0 L3.00 0 L1.50 1.72 Z" fill="#222"/></svg>
<div class="a" style="left:276px;top:529.6px;width:75px;height:12px;background:#e2e2e2;border:1px solid #d2d2d2;"></div>
<svg style="left:277.5px;top:531px;" width="8" height="9" viewBox="0 0 8 9"><rect x="0.6" y="0.8" width="4.6" height="4" fill="#eaf3fd" stroke="#2f7fd6" stroke-width="0.8"/><rect x="2.4" y="3.4" width="4.6" height="4" fill="#eaf3fd" stroke="#2f7fd6" stroke-width="0.8"/></svg>
<div class="t" style="left:288.50px;top:532.18px;font-size:5.6px;transform:scaleX(1.066);color:#333;">Design Model</div>
<svg style="left:344.50px;top:534.34px" width="3.00" height="1.72" viewBox="0 0 3.00 1.72"><path d="M0 0 L3.00 0 L1.50 1.72 Z" fill="#222"/></svg>
<svg style="left:355px;top:529px;" width="13" height="12" viewBox="0 0 13 12"><rect x="0.8" y="1" width="8.4" height="6.4" fill="#e4effc" stroke="#2f7fd6" stroke-width="1"/><rect x="3.6" y="4.4" width="8.4" height="6.4" fill="#f4f9ff" stroke="#2f7fd6" stroke-width="1"/><rect x="0.8" y="1" width="8.4" height="1.6" fill="#2f7fd6"/></svg>
<div class="a" style="left:371.8px;top:530px;width:7px;height:10.5px;background:#2f7fd6;"></div>
<div class="t" style="left:373.80px;top:532.29px;font-size:5.4px;color:#fff;">1</div>
<div class="a" style="left:379.2px;top:530.5px;width:1px;height:10px;background:#555"></div>
<div class="t" style="left:381.25px;top:532.29px;font-size:5.4px;color:#333;">2</div>
<div class="a" style="left:386.45px;top:530.5px;width:1px;height:10px;background:#555"></div>
<div class="t" style="left:389.30px;top:532.29px;font-size:5.4px;color:#333;">3</div>
<div class="a" style="left:394.5px;top:530.5px;width:1px;height:10px;background:#555"></div>
<div class="t" style="left:397.35px;top:532.29px;font-size:5.4px;color:#333;">4</div>
<div class="a" style="left:402.54999999999995px;top:530.5px;width:1px;height:10px;background:#555"></div>
<div class="t" style="left:405.40px;top:532.29px;font-size:5.4px;color:#333;">5</div>
<div class="a" style="left:410.59999999999997px;top:530.5px;width:1px;height:10px;background:#555"></div>
<div class="t" style="left:413.45px;top:532.29px;font-size:5.4px;color:#333;">6</div>
<div class="a" style="left:418.65px;top:530.5px;width:1px;height:10px;background:#555"></div>
<div class="t" style="left:421.50px;top:532.29px;font-size:5.4px;color:#333;">7</div>
<div class="a" style="left:426.7px;top:530.5px;width:1px;height:10px;background:#555"></div>
<div class="t" style="left:429.55px;top:532.29px;font-size:5.4px;color:#333;">8</div>
<div class="a" style="left:434.75px;top:530.5px;width:1px;height:10px;background:#555"></div>
<div class="a" style="left:438.5px;top:528px;width:1px;height:13px;background:#d0d0d0"></div>
<svg style="left:442.5px;top:529px;" width="14" height="12" viewBox="0 0 14 12"><path d="M2 3 Q6.5 0.4 11 3 L11 9 Q6.5 11.6 2 9 Z" fill="#6a8cc8"/><ellipse cx="6.5" cy="3" rx="4.5" ry="1.5" fill="#9ab8e8"/><rect x="6.6" y="5.6" width="5.6" height="5.4" fill="#f0d060" stroke="#c8a020" stroke-width="0.6"/></svg>
<div class="a" style="left:459px;top:529.6px;width:223.5px;height:12px;background:#e2e2e2;border:1px solid #d2d2d2;"></div>
<svg style="left:461.5px;top:531.5px;" width="8" height="8" viewBox="0 0 8 8"><rect x="0.6" y="0.8" width="6" height="5.4" fill="#f4f4f4" stroke="#777" stroke-width="0.7"/><path d="M2 4.6 L3.6 2.4 L5 4.6" fill="none" stroke="#666" stroke-width="0.7"/></svg>
<div class="t" style="left:472.50px;top:532.06px;font-size:5.8px;transform:scaleX(1.046);color:#333;">None</div>
<svg style="left:677.10px;top:534.34px" width="3.00" height="1.72" viewBox="0 0 3.00 1.72"><path d="M0 0 L3.00 0 L1.50 1.72 Z" fill="#222"/></svg>
<div class="a" style="left:684px;top:531.2px;width:36px;height:10px;background:#fbfcfe;border:1px solid #ccd4e0;"></div>
<div class="t" style="left:687.50px;top:532.35px;font-size:5.3px;transform:scaleX(1.086);color:#a0a8b4;">0.00°</div>
<div class="a" style="left:720px;top:531.2px;width:7.4px;height:10px;background:#dedede;border:1px solid #d0d0d0;"></div>
<svg style="left:723.00px;top:535.02px" width="2.00" height="1.15" viewBox="0 0 2.00 1.15"><path d="M0 0 L2.00 0 L1.00 1.15 Z" fill="#aaa"/></svg>
<svg style="left:731px;top:530px;" width="11" height="10" viewBox="0 0 11 10"><rect x="0.8" y="1.4" width="8.6" height="8" fill="#f2f2f2" stroke="#b4b4b4" stroke-width="0.9"/><path d="M0.8 2.6 L9.4 2.6" stroke="#a4a4a4" stroke-width="1"/></svg>
<svg style="left:745px;top:530px;" width="13" height="10" viewBox="0 0 13 10"><path d="M2 8 L6 1.6 L10.6 8 M1 4.4 L11.6 4.4" fill="none" stroke="#d4d4d4" stroke-width="0.9"/></svg>
<svg style="left:760.70px;top:534.65px" width="2.60" height="1.49" viewBox="0 0 2.60 1.49"><path d="M0 0 L2.60 0 L1.30 1.49 Z" fill="#444"/></svg>
<div class="a" style="left:767px;top:528px;width:1px;height:13px;background:#d0d0d0"></div>
<svg style="left:769px;top:528.5px;" width="13" height="13" viewBox="0 0 13 13"><path d="M1 3 L12 3 M1 6 L12 6 M1 9 L12 9 M1 12 L12 12 M2 1.6 L2 12.6 M5 1.6 L5 12.6 M8 1.6 L8 12.6 M11 1.6 L11 12.6" stroke="#70a8e6" stroke-width="0.9" stroke-dasharray="1.6 0.7"/></svg>
<svg style="left:786px;top:528.5px;" width="13" height="13" viewBox="0 0 13 13"><path d="M1 3 L12 3 M1 6 L12 6 M1 9 L12 9 M1 12 L12 12 M2 1.6 L2 12.6 M5 1.6 L5 12.6 M8 1.6 L8 12.6 M11 1.6 L11 12.6" stroke="#70a8e6" stroke-width="0.9" stroke-dasharray="1.6 0.7"/><rect x="5" y="6.6" width="4.6" height="4.6" fill="#333"/><path d="M5.8 8.8 L7 10 L9 7.4" fill="none" stroke="#fff" stroke-width="0.7"/></svg>
<svg style="left:801.60px;top:534.60px" width="2.80" height="1.61" viewBox="0 0 2.80 1.61"><path d="M0 0 L2.80 0 L1.40 1.61 Z" fill="#222"/></svg>
<svg style="left:808px;top:528.5px;" width="13" height="13" viewBox="0 0 13 13"><path d="M1 3 L12 3 M1 6 L12 6 M1 9 L12 9 M1 12 L12 12 M2 1.6 L2 12.6 M5 1.6 L5 12.6 M8 1.6 L8 12.6 M11 1.6 L11 12.6" stroke="#70a8e6" stroke-width="0.9" stroke-dasharray="1.6 0.7"/><rect x="3.4" y="5" width="5.4" height="4" fill="#2f7fd6"/></svg>
<svg style="left:823.60px;top:534.60px" width="2.80" height="1.61" viewBox="0 0 2.80 1.61"><path d="M0 0 L2.80 0 L1.40 1.61 Z" fill="#222"/></svg>
<div class="a" style="left:0px;top:0px;width:963px;height:2px;background:#fafafa;"></div>
<div class="a" style="left:0px;top:0px;width:2px;height:541px;background:#fafafa;"></div>
</div></body></html>
